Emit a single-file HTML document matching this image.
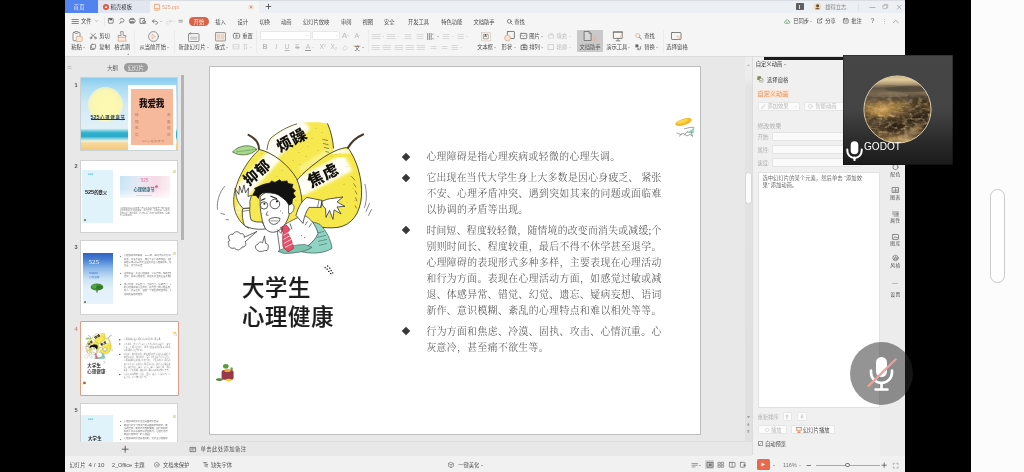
<!DOCTYPE html>
<html lang="zh-CN">
<head>
<meta charset="utf-8">
<title>525.ppt - WPS</title>
<style>
*{box-sizing:border-box;margin:0;padding:0}
html,body{width:1024px;height:472px;overflow:hidden;background:#000}
body{position:relative;font-family:"Liberation Sans","Noto Sans CJK SC",sans-serif;font-size:5.3px;color:#444;line-height:1}
#app div,#app svg,#side div,.ov,.ov div,.ov svg{position:absolute}
#app{position:absolute;left:65px;top:0;width:840.4px;height:472px;background:#f4f4f4;overflow:hidden;filter:blur(.35px)}
#side{position:absolute;left:971px;top:0;width:53px;height:472px;background:#fcfcfc}
.t{white-space:nowrap;font-size:5.3px;line-height:8px;height:8px;color:#484848;letter-spacing:-.05px}
.t.g{color:#b9b9b9}
.ic{overflow:visible}
#tabs{left:0;top:0;width:840px;height:13px;background:#eceff4}
#menu{left:0;top:13px;width:840px;height:14px;background:#f5f5f5}
#tool{left:0;top:27px;width:840px;height:30px;background:#f5f5f5;border-bottom:1px solid #dcdcdc}
#thumbs{left:0;top:57px;width:119px;height:400px;background:#e8e8e8}
#edit{left:119px;top:57px;width:568px;height:400px;background:#e8e8e8}
#slide{left:145px;top:66.6px;width:490px;height:367px;background:#fff;overflow:hidden}
#rpanel{left:687px;top:57px;width:153px;height:400px;background:#f0f0f0}
#status{left:0;top:455.6px;width:841px;height:17px;background:#f1f1f1}
.sep{width:1px;background:#e2e2e2}
/* slide text (coordinates relative to slide) */
.bl{left:216.4px;width:235px;height:16px;line-height:16px;font-family:"Liberation Serif","Noto Serif CJK SC",serif;font-weight:300;font-size:9.8px;color:#484848;white-space:nowrap;text-align:justify;text-align-last:justify}
.bl.s{text-align-last:left;letter-spacing:.42px}
.dm{width:6px;height:6px;background:#383838;transform:rotate(45deg);left:193.4px}
.ttl{left:32px;font-family:"Liberation Sans","Noto Sans CJK SC",sans-serif;font-weight:500;font-size:22.3px;line-height:29px;height:29px;color:#1c1c1c;-webkit-text-stroke:.22px #1c1c1c;white-space:nowrap;letter-spacing:.75px}
/* thumbnails */
.th{left:15.5px;width:97.5px;height:74px;background:#fff;border:.6px solid #cfcfcf;overflow:hidden}
.mini{left:0;top:0;width:490px;height:367px;transform:scale(.198);transform-origin:0 0}
.num{font-size:5.6px;font-weight:bold;color:#555;left:7px;width:8px;text-align:center;height:8px;line-height:8px}
.tt{white-space:nowrap;color:#666;font-size:2.6px;line-height:3.5px;height:3.5px;overflow:hidden}
</style>
</head>
<body>
<div id="app">
<div id="tabs"></div><div id="menu"></div><div id="tool"></div>
<div style="left:0.0px;top:0.0px;width:840.0px;height:1.0px;background:#d9dce2"></div>
<div style="left:0.0px;top:0.0px;width:32.5px;height:13.0px;background:#5283ee"></div>
<div class="t " style="left:8.5px;top:2.8px;width:11.0px;text-align:justify;text-align-last:justify;color:#e8eefc;">首页</div>
<div style="left:33.0px;top:0.5px;width:52.0px;height:12.5px;background:#e1e6f1"></div>
<svg class="ic" style="left:37.5px;top:3.8px" width="6" height="6" viewBox="0 0 6 6" fill="none" stroke="#555" stroke-width="0.8" stroke-linecap="round" stroke-linejoin="round" ><circle cx="3" cy="3" r="3" fill="#e0563f" stroke="none"/><path d="M1.6 4.1 L3 1.6 L4.4 4.1 Z" fill="#fff" stroke="none"/></svg>
<div class="t " style="left:45.5px;top:2.8px;width:21.5px;text-align:justify;text-align-last:justify;color:#333;">稻壳模板</div>
<div style="left:85.0px;top:0.5px;width:108.5px;height:12.5px;background:#f5f5f5;border-radius:2px 2px 0 0"></div>
<svg class="ic" style="left:88.5px;top:3.5px" width="6" height="6.6" viewBox="0 0 6 6.6" fill="none" stroke="#555" stroke-width="0.8" stroke-linecap="round" stroke-linejoin="round" ><rect x=".4" y=".4" width="5.2" height="5.8" rx=".6" fill="#fdf1e6" stroke="#e5a070" stroke-width=".8"/><path d="M1.4 4.6h3.2" stroke="#e5a070" stroke-width=".8"/></svg>
<div class="t " style="left:97.0px;top:2.9px;color:#e0a280;font-size:5.2px">525.ppt</div>
<svg class="ic" style="left:184.0px;top:5.0px" width="4" height="4" viewBox="0 0 4 4" fill="none" stroke="#555" stroke-width="0.8" stroke-linecap="round" stroke-linejoin="round" ><circle cx="2" cy="2" r="2.6" fill="#f6e3d6" stroke="none"/><path d="M1 1l2 2M3 1l-2 2" stroke="#a77" stroke-width=".6"/></svg>
<svg class="ic" style="left:200.8px;top:4.3px" width="5" height="5" viewBox="0 0 5 5" fill="none" stroke="#555" stroke-width="0.8" stroke-linecap="round" stroke-linejoin="round" ><path d="M2.5 .2v4.6M.2 2.5h4.6" stroke="#444" stroke-width=".8"/></svg>
<div style="left:731.0px;top:3.2px;width:7.6px;height:7.0px;background:#5f5f5f;border-radius:.8px"></div>
<div style="left:734.2px;top:4.6px;width:1.2px;height:4.2px;background:#ddd"></div>
<svg class="ic" style="left:748.7px;top:3.3px" width="7" height="7" viewBox="0 0 7 7" fill="none" stroke="#555" stroke-width="0.8" stroke-linecap="round" stroke-linejoin="round" ><circle cx="3.5" cy="3.5" r="3.5" fill="#e9d9b6" stroke="none"/><circle cx="3.6" cy="2.8" r="1.5" fill="#6b4a2b" stroke="none"/><path d="M1.2 6.2c.5-2 4-2 4.6 0z" fill="#7a5530" stroke="none"/></svg>
<div class="t " style="left:760.2px;top:2.9px;width:22.0px;text-align:justify;text-align-last:justify;color:#888;">雄得立志.</div>
<div style="left:793.0px;top:3.0px;width:1.0px;height:8.0px;background:#dfe2e8"></div>
<svg class="ic" style="left:804.8px;top:6.9px" width="5" height="1" viewBox="0 0 5 1" fill="none" stroke="#555" stroke-width="0.8" stroke-linecap="round" stroke-linejoin="round" ><path d="M0 .5h5" stroke="#999" stroke-width=".7"/></svg>
<svg class="ic" style="left:817.5px;top:4.3px" width="5" height="5" viewBox="0 0 5 5" fill="none" stroke="#555" stroke-width="0.8" stroke-linecap="round" stroke-linejoin="round" ><rect x=".3" y="1.2" width="3.4" height="3.4" stroke="#a0a0a0" stroke-width=".6"/><path d="M1.4 1.2V.3h3.3v3.3h-1" stroke="#a0a0a0" stroke-width=".6"/></svg>
<svg class="ic" style="left:831.8px;top:4.6px" width="4.4" height="4.4" viewBox="0 0 4.4 4.4" fill="none" stroke="#555" stroke-width="0.8" stroke-linecap="round" stroke-linejoin="round" ><path d="M.3 .3l3.8 3.8M4.1 .3L.3 4.1" stroke="#999" stroke-width=".7"/></svg>
<svg class="ic" style="left:7.0px;top:18.5px" width="6.4" height="5" viewBox="0 0 6.4 5" fill="none" stroke="#555" stroke-width="0.8" stroke-linecap="round" stroke-linejoin="round" ><path d="M0 .5h6.4M0 2.5h6.4M0 4.5h6.4" stroke="#686868" stroke-width=".8"/></svg>
<div class="t " style="left:16.0px;top:17.0px;width:10.4px;text-align:justify;text-align-last:justify;">文件</div>
<svg class="ic" style="left:30.2px;top:20.3px" width="3" height="2" viewBox="0 0 3 2" fill="none" stroke="#555" stroke-width="0.8" stroke-linecap="round" stroke-linejoin="round" ><path d="M.2 .3l1.3 1.3L2.8 .3" stroke="#999" stroke-width=".6"/></svg>
<div style="left:38.6px;top:15.5px;width:1.0px;height:10.0px;background:#e8e8e8"></div>
<svg class="ic" style="left:42.8px;top:18.2px" width="5.6" height="5.6" viewBox="0 0 5.6 5.6" fill="none" stroke="#555" stroke-width="0.8" stroke-linecap="round" stroke-linejoin="round" ><rect x=".4" y=".4" width="4.8" height="4.8" rx=".5" stroke="#686868"/><rect x="1.5" y=".5" width="2.6" height="1.8" fill="#555" stroke="none"/></svg>
<svg class="ic" style="left:53.6px;top:18.0px" width="6" height="6" viewBox="0 0 6 6" fill="none" stroke="#555" stroke-width="0.8" stroke-linecap="round" stroke-linejoin="round" ><path d="M1 1.2c1.6-1.4 4-.4 4 1.4 0 1.600-2 2.200-3 1.200M2 3.800L.8 5.600" stroke="#686868"/></svg>
<svg class="ic" style="left:64.3px;top:18.2px" width="6.4" height="5.6" viewBox="0 0 6.4 5.6" fill="none" stroke="#555" stroke-width="0.8" stroke-linecap="round" stroke-linejoin="round" ><rect x=".4" y="1.600" width="5.6" height="2.800" rx=".6" stroke="#686868"/><path d="M1.600 1.600V.4h3.200v1.200M1.600 3.600h3.200v1.600H1.600z" stroke="#686868"/></svg>
<svg class="ic" style="left:75.4px;top:18.0px" width="6" height="6" viewBox="0 0 6 6" fill="none" stroke="#555" stroke-width="0.8" stroke-linecap="round" stroke-linejoin="round" ><rect x=".4" y=".4" width="4" height="5" stroke="#686868"/><circle cx="4" cy="3.800" r="1.300" fill="#f5f5f5" stroke="#686868"/><path d="M5 4.800l.8.800" stroke="#686868"/></svg>
<svg class="ic" style="left:86.7px;top:18.5px" width="6" height="5" viewBox="0 0 6 5" fill="none" stroke="#555" stroke-width="0.8" stroke-linecap="round" stroke-linejoin="round" ><path d="M.6 2.200h3c1.400 0 2 .8 2 1.600s-.8 1.400-1.800 1.400M2 .6L.4 2.200 2 3.800" stroke="#666"/></svg>
<svg class="ic" style="left:94.6px;top:20.6px" width="2" height="1.4" viewBox="0 0 2 1.4" fill="none" stroke="#555" stroke-width="0.8" stroke-linecap="round" stroke-linejoin="round" ><path d="M.2 .2l.8.8.8-.8" stroke="#999" stroke-width=".5"/></svg>
<svg class="ic" style="left:100.8px;top:18.5px" width="6" height="5" viewBox="0 0 6 5" fill="none" stroke="#555" stroke-width="0.8" stroke-linecap="round" stroke-linejoin="round" ><path d="M5.400 2.200h-3c-1.400 0-2 .8-2 1.600s.8 1.400 1.800 1.400M4 .6l1.600 1.600L4 3.800" stroke="#cfcfcf"/></svg>
<svg class="ic" style="left:108.0px;top:20.6px" width="2" height="1.4" viewBox="0 0 2 1.4" fill="none" stroke="#555" stroke-width="0.8" stroke-linecap="round" stroke-linejoin="round" ><path d="M.2 .2l.8.8.8-.8" stroke="#ccc" stroke-width=".5"/></svg>
<svg class="ic" style="left:113.7px;top:20.1px" width="3.4" height="2.4" viewBox="0 0 3.4 2.4" fill="none" stroke="#555" stroke-width="0.8" stroke-linecap="round" stroke-linejoin="round" ><path d="M0 .3h3.400M0 2h3.400" stroke="#666" stroke-width=".6"/></svg>
<div style="left:124.0px;top:17.4px;width:19.6px;height:8.8px;background:#d9634a;border-radius:4.4px"></div>
<div class="t " style="left:128.4px;top:17.8px;width:10.8px;text-align:justify;text-align-last:justify;color:#fff3d6;">开始</div>
<div class="t " style="left:150.3px;top:17.6px;width:10.5px;text-align:justify;text-align-last:justify;">插入</div>
<div class="t " style="left:172.4px;top:17.6px;width:10.3px;text-align:justify;text-align-last:justify;">设计</div>
<div class="t " style="left:194.5px;top:17.6px;width:10.5px;text-align:justify;text-align-last:justify;">切换</div>
<div class="t " style="left:216.0px;top:17.6px;width:10.5px;text-align:justify;text-align-last:justify;">动画</div>
<div class="t " style="left:238.0px;top:17.6px;width:26.0px;text-align:justify;text-align-last:justify;">幻灯片放映</div>
<div class="t " style="left:276.0px;top:17.6px;width:10.3px;text-align:justify;text-align-last:justify;">审阅</div>
<div class="t " style="left:297.5px;top:17.6px;width:10.3px;text-align:justify;text-align-last:justify;">视图</div>
<div class="t " style="left:319.0px;top:17.6px;width:10.5px;text-align:justify;text-align-last:justify;">安全</div>
<div class="t " style="left:343.0px;top:17.6px;width:20.8px;text-align:justify;text-align-last:justify;">开发工具</div>
<div class="t " style="left:376.2px;top:17.6px;width:20.8px;text-align:justify;text-align-last:justify;">特色功能</div>
<div class="t " style="left:408.4px;top:17.6px;width:21.0px;text-align:justify;text-align-last:justify;">文档助手</div>
<svg class="ic" style="left:442.0px;top:18.6px" width="5.6" height="5.6" viewBox="0 0 5.6 5.6" fill="none" stroke="#555" stroke-width="0.8" stroke-linecap="round" stroke-linejoin="round" ><circle cx="2.300" cy="2.300" r="1.900" stroke="#686868"/><path d="M3.700 3.700l1.600 1.600" stroke="#686868"/></svg>
<div class="t " style="left:449.3px;top:17.6px;width:10.4px;text-align:justify;text-align-last:justify;">查找</div>
<svg class="ic" style="left:719.0px;top:18.5px" width="6.4" height="5" viewBox="0 0 6.4 5" fill="none" stroke="#555" stroke-width="0.8" stroke-linecap="round" stroke-linejoin="round" ><path d="M1.600 4.400c-1.600 0-1.600-2.200 0-2.200.2-2 3-2 3.200 0 1.600 0 1.600 2.200 0 2.200z" stroke="#6a6"/><path d="M2.400 3l.7.700 1.200-1.300" stroke="#6a6" stroke-width=".6"/></svg>
<div class="t " style="left:728.3px;top:17.3px;width:15.2px;text-align:justify;text-align-last:justify;">已同步</div>
<svg class="ic" style="left:744.6px;top:20.8px" width="2" height="1.4" viewBox="0 0 2 1.4" fill="none" stroke="#555" stroke-width="0.8" stroke-linecap="round" stroke-linejoin="round" ><path d="M.2 .2l.8.8.8-.8" stroke="#999" stroke-width=".5"/></svg>
<svg class="ic" style="left:751.8px;top:18.3px" width="5.6" height="5.4" viewBox="0 0 5.6 5.4" fill="none" stroke="#555" stroke-width="0.8" stroke-linecap="round" stroke-linejoin="round" ><path d="M2.400 1H.5v4h4V3.400" stroke="#666" stroke-width=".7"/><path d="M2.400 3c.2-1.400 1.200-2 2.600-2M4 .2L5.200 1 4 1.900" stroke="#666" stroke-width=".7"/></svg>
<div class="t " style="left:760.3px;top:17.3px;width:10.4px;text-align:justify;text-align-last:justify;">分享</div>
<svg class="ic" style="left:777.6px;top:18.2px" width="5.6" height="5.6" viewBox="0 0 5.6 5.6" fill="none" stroke="#555" stroke-width="0.8" stroke-linecap="round" stroke-linejoin="round" ><rect x=".4" y=".8" width="4.800" height="4.400" rx=".6" stroke="#666" stroke-width=".7"/><path d="M1.600 .3v1.200M4 .3v1.200M1.600 3h2.400" stroke="#666" stroke-width=".7"/></svg>
<div class="t " style="left:786.2px;top:17.3px;width:10.4px;text-align:justify;text-align-last:justify;">批注</div>
<div class="t " style="left:805.6px;top:17.3px;font-size:7px;color:#666">?</div>
<svg class="ic" style="left:818.8px;top:18.5px" width="1" height="5" viewBox="0 0 1 5" fill="none" stroke="#555" stroke-width="0.8" stroke-linecap="round" stroke-linejoin="round" ><circle cx=".5" cy=".6" r=".45" fill="#888" stroke="none"/><circle cx=".5" cy="2.500" r=".45" fill="#888" stroke="none"/><circle cx=".5" cy="4.400" r=".45" fill="#888" stroke="none"/></svg>
<svg class="ic" style="left:827.5px;top:19.5px" width="5.6" height="3" viewBox="0 0 5.6 3" fill="none" stroke="#555" stroke-width="0.8" stroke-linecap="round" stroke-linejoin="round" ><path d="M.3 2.700L2.800 .4l2.500 2.300" stroke="#888" stroke-width=".7"/></svg>
<svg class="ic" style="left:7.1px;top:30.6px" width="11" height="11.5" viewBox="0 0 11 11.5" fill="none" stroke="#555" stroke-width="0.8" stroke-linecap="round" stroke-linejoin="round" ><rect x="1" y="1.400" width="7" height="8.400" rx="1" stroke="#777" stroke-width=".8"/><rect x="2.800" y=".5" width="3.400" height="1.800" rx=".5" fill="#f5f5f5" stroke="#777" stroke-width=".7"/><rect x="4.400" y="5.400" width="5.800" height="5.200" rx=".8" fill="#fbe9dc" stroke="#d9a98a" stroke-width=".8"/></svg>
<div class="t " style="left:6.2px;top:43.3px;width:10.4px;text-align:justify;text-align-last:justify;">粘贴</div>
<svg class="ic" style="left:18.4px;top:47.0px" width="2" height="1.4" viewBox="0 0 2 1.4" fill="none" stroke="#555" stroke-width="0.8" stroke-linecap="round" stroke-linejoin="round" ><path d="M0 .2h2L1 1.300z" fill="#888" stroke="none"/></svg>
<svg class="ic" style="left:24.8px;top:32.9px" width="6.4" height="6" viewBox="0 0 6.4 6" fill="none" stroke="#555" stroke-width="0.8" stroke-linecap="round" stroke-linejoin="round" ><path d="M.8 .6l4.600 4M5.400 .6L.8 4.600" stroke="#686868" stroke-width=".7"/><circle cx="1" cy="5" r=".9" stroke="#686868" stroke-width=".6"/><circle cx="5.400" cy="5" r=".9" stroke="#686868" stroke-width=".6"/></svg>
<div class="t " style="left:34.3px;top:32.0px;width:10.4px;text-align:justify;text-align-last:justify;">剪切</div>
<svg class="ic" style="left:25.4px;top:43.7px" width="6" height="6" viewBox="0 0 6 6" fill="none" stroke="#555" stroke-width="0.8" stroke-linecap="round" stroke-linejoin="round" ><rect x="1.600" y=".4" width="4" height="4" rx=".5" stroke="#686868" stroke-width=".7"/><path d="M.5 1.800v3.700h3.700" stroke="#686868" stroke-width=".7"/></svg>
<div class="t " style="left:34.3px;top:43.3px;width:10.4px;text-align:justify;text-align-last:justify;">复制</div>
<svg class="ic" style="left:52.3px;top:30.7px" width="10" height="11" viewBox="0 0 10 11" fill="none" stroke="#555" stroke-width="0.8" stroke-linecap="round" stroke-linejoin="round" ><path d="M3.800 .6h2.400v3.800h2.600v2H1.200v-2h2.600z" stroke="#888" stroke-width=".8" fill="#f7efe8"/><path d="M1.600 6.400L.8 10.200h8.400L8.400 6.400" stroke="#d9a98a" stroke-width=".8" fill="#fbe9dc"/></svg>
<div class="t " style="left:49.2px;top:43.3px;width:16.0px;text-align:justify;text-align-last:justify;">格式刷</div>
<div style="left:69.4px;top:30.0px;width:1.0px;height:23.0px;background:#ebebeb"></div>
<svg class="ic" style="left:61.5px;top:53.3px" width="2" height="2" viewBox="0 0 2 2" fill="none" stroke="#555" stroke-width="0.8" stroke-linecap="round" stroke-linejoin="round" ><path d="M2 0v2H0z" fill="#aaa" stroke="none"/></svg>
<svg class="ic" style="left:82.9px;top:30.9px" width="11" height="11" viewBox="0 0 11 11" fill="none" stroke="#555" stroke-width="0.8" stroke-linecap="round" stroke-linejoin="round" ><circle cx="5.500" cy="5.500" r="4.900" stroke="#777" stroke-width=".8"/><path d="M4.400 3.400l3 2.100-3 2.100z" stroke="#e0a07c" stroke-width=".7" fill="#fdf3ec"/></svg>
<div class="t " style="left:74.4px;top:43.3px;width:26.5px;text-align:justify;text-align-last:justify;">从当前开始</div>
<svg class="ic" style="left:102.3px;top:47.0px" width="2" height="1.4" viewBox="0 0 2 1.4" fill="none" stroke="#555" stroke-width="0.8" stroke-linecap="round" stroke-linejoin="round" ><path d="M0 .2h2L1 1.300z" fill="#888" stroke="none"/></svg>
<div style="left:109.4px;top:30.0px;width:1.0px;height:23.0px;background:#ebebeb"></div>
<svg class="ic" style="left:122.7px;top:31.6px" width="11.5" height="10" viewBox="0 0 11.5 10" fill="none" stroke="#555" stroke-width="0.8" stroke-linecap="round" stroke-linejoin="round" ><rect x=".5" y="1.600" width="10.500" height="7.900" rx=".8" stroke="#777" stroke-width=".8"/><path d="M2.600 .4v2M2.600 5.200h6.400M2.600 7h6.400" stroke="#999" stroke-width=".7"/></svg>
<div class="t " style="left:113.6px;top:43.3px;width:27.0px;text-align:justify;text-align-last:justify;">新建幻灯片</div>
<svg class="ic" style="left:142.3px;top:47.0px" width="2" height="1.4" viewBox="0 0 2 1.4" fill="none" stroke="#555" stroke-width="0.8" stroke-linecap="round" stroke-linejoin="round" ><path d="M0 .2h2L1 1.300z" fill="#888" stroke="none"/></svg>
<svg class="ic" style="left:149.9px;top:31.6px" width="11" height="9.5" viewBox="0 0 11 9.5" fill="none" stroke="#555" stroke-width="0.8" stroke-linecap="round" stroke-linejoin="round" ><rect x=".5" y=".5" width="10" height="8.500" rx=".6" stroke="#888" stroke-width=".8" fill="#f2e6dc"/><rect x="2" y="2.200" width="3" height="5" fill="#e6d3c3" stroke="none"/><rect x="6" y="2.200" width="3" height="5" fill="#e6d3c3" stroke="none"/></svg>
<div class="t " style="left:149.6px;top:43.3px;width:10.4px;text-align:justify;text-align-last:justify;">版式</div>
<svg class="ic" style="left:161.2px;top:47.0px" width="2" height="1.4" viewBox="0 0 2 1.4" fill="none" stroke="#555" stroke-width="0.8" stroke-linecap="round" stroke-linejoin="round" ><path d="M0 .2h2L1 1.300z" fill="#888" stroke="none"/></svg>
<svg class="ic" style="left:167.9px;top:33.1px" width="7" height="5.6" viewBox="0 0 7 5.6" fill="none" stroke="#555" stroke-width="0.8" stroke-linecap="round" stroke-linejoin="round" ><rect x=".4" y=".4" width="6.200" height="4.800" rx="1" stroke="#666" stroke-width=".7"/><path d="M2.400 2.800h2.400M3.600 1.800v2" stroke="#666" stroke-width=".6"/></svg>
<div class="t " style="left:177.3px;top:32.0px;width:10.4px;text-align:justify;text-align-last:justify;">重置</div>
<svg class="ic" style="left:168.2px;top:44.2px" width="6.4" height="5.4" viewBox="0 0 6.4 5.4" fill="none" stroke="#555" stroke-width="0.8" stroke-linecap="round" stroke-linejoin="round" ><rect x=".4" y=".4" width="5.600" height="4.600" stroke="#cdcdcd" stroke-width=".7"/><path d="M.4 2.700h5.600" stroke="#cdcdcd" stroke-width=".6"/></svg>
<div class="t g" style="left:177.6px;top:43.3px;">节</div>
<svg class="ic" style="left:184.6px;top:47.0px" width="2" height="1.4" viewBox="0 0 2 1.4" fill="none" stroke="#555" stroke-width="0.8" stroke-linecap="round" stroke-linejoin="round" ><path d="M0 .2h2L1 1.300z" fill="#cdcdcd" stroke="none"/></svg>
<div style="left:191.2px;top:30.0px;width:1.0px;height:23.0px;background:#ebebeb"></div>
<div style="left:195.0px;top:31.2px;width:50.5px;height:9.0px;background:#fff;border:.6px solid #e8e8e8;border-radius:1px"></div>
<svg class="ic" style="left:241.0px;top:35.1px" width="2" height="1.4" viewBox="0 0 2 1.4" fill="none" stroke="#555" stroke-width="0.8" stroke-linecap="round" stroke-linejoin="round" ><path d="M0 .2h2L1 1.300z" fill="#d0d0d0" stroke="none"/></svg>
<div style="left:246.5px;top:31.2px;width:28.3px;height:9.0px;background:#fff;border:.6px solid #e8e8e8;border-radius:1px"></div>
<svg class="ic" style="left:270.5px;top:35.1px" width="2" height="1.4" viewBox="0 0 2 1.4" fill="none" stroke="#555" stroke-width="0.8" stroke-linecap="round" stroke-linejoin="round" ><path d="M0 .2h2L1 1.300z" fill="#d0d0d0" stroke="none"/></svg>
<div class="t g" style="left:277.0px;top:32.1px;font-size:7.5px">A</div>
<div class="t g" style="left:281.8px;top:30.7px;font-size:4px">+</div>
<div class="t g" style="left:289.5px;top:32.1px;font-size:7px">A</div>
<div class="t g" style="left:294.0px;top:30.7px;font-size:4px">-</div>
<div class="t g" style="left:197.4px;top:43.3px;font-size:7px;font-weight:bold">B</div>
<div class="t g" style="left:210.2px;top:43.3px;font-size:7px;font-style:italic">I</div>
<div class="t g" style="left:219.6px;top:43.3px;font-size:7px;text-decoration:underline">U</div>
<div class="t g" style="left:230.0px;top:43.3px;font-size:7px;text-decoration:line-through">S</div>
<div class="t " style="left:240.8px;top:42.9px;font-size:6.600px;color:#bbb">A</div>
<div style="left:240.2px;top:50.3px;width:6.0px;height:0.8px;background:#999"></div>
<svg class="ic" style="left:247.0px;top:47.0px" width="2" height="1.4" viewBox="0 0 2 1.4" fill="none" stroke="#555" stroke-width="0.8" stroke-linecap="round" stroke-linejoin="round" ><path d="M0 .2h2L1 1.300z" fill="#cdcdcd" stroke="none"/></svg>
<div class="t g" style="left:254.5px;top:43.3px;font-size:6.500px">X</div>
<div class="t g" style="left:259.0px;top:41.5px;font-size:3.500px">2</div>
<div class="t g" style="left:265.5px;top:43.3px;font-size:6.500px">X</div>
<div class="t g" style="left:270.0px;top:44.9px;font-size:3.500px">2</div>
<svg class="ic" style="left:277.3px;top:44.5px" width="6" height="5.6" viewBox="0 0 6 5.6" fill="none" stroke="#555" stroke-width="0.8" stroke-linecap="round" stroke-linejoin="round" ><path d="M1 3.200L3.200 .6l2.200 2.200L3.400 5H1.800z" stroke="#cdcdcd" stroke-width=".7"/></svg>
<div style="left:288.4px;top:44.6px;width:7.6px;height:2.4px;background:#f3d9c6;border-radius:1.200px"></div>
<div class="t " style="left:289.6px;top:44.3px;font-size:5.400px;color:#555">文</div>
<svg class="ic" style="left:297.4px;top:47.0px" width="2" height="1.4" viewBox="0 0 2 1.4" fill="none" stroke="#555" stroke-width="0.8" stroke-linecap="round" stroke-linejoin="round" ><path d="M0 .2h2L1 1.300z" fill="#777" stroke="none"/></svg>
<div style="left:302.6px;top:30.0px;width:1.0px;height:23.0px;background:#ebebeb"></div>
<svg class="ic" style="left:307.0px;top:33.8px" width="8" height="5" viewBox="0 0 8 5" fill="none" stroke="#555" stroke-width="0.8" stroke-linecap="round" stroke-linejoin="round" ><path d="M0 0.5h8" stroke="#cdcdcd" stroke-width=".7"/><path d="M0 2.5h8" stroke="#cdcdcd" stroke-width=".7"/><path d="M0 4.5h8" stroke="#cdcdcd" stroke-width=".7"/></svg>
<svg class="ic" style="left:317.0px;top:36.0px" width="2" height="1.4" viewBox="0 0 2 1.4" fill="none" stroke="#555" stroke-width="0.8" stroke-linecap="round" stroke-linejoin="round" ><path d="M0 .2h2L1 1.300z" fill="#cdcdcd" stroke="none"/></svg>
<svg class="ic" style="left:322.0px;top:33.8px" width="8" height="5" viewBox="0 0 8 5" fill="none" stroke="#555" stroke-width="0.8" stroke-linecap="round" stroke-linejoin="round" ><path d="M0 0.5h8" stroke="#cdcdcd" stroke-width=".7"/><path d="M0 2.5h8" stroke="#cdcdcd" stroke-width=".7"/><path d="M0 4.5h8" stroke="#cdcdcd" stroke-width=".7"/></svg>
<svg class="ic" style="left:332.0px;top:36.0px" width="2" height="1.4" viewBox="0 0 2 1.4" fill="none" stroke="#555" stroke-width="0.8" stroke-linecap="round" stroke-linejoin="round" ><path d="M0 .2h2L1 1.300z" fill="#cdcdcd" stroke="none"/></svg>
<svg class="ic" style="left:339.5px;top:33.8px" width="6" height="5" viewBox="0 0 6 5" fill="none" stroke="#555" stroke-width="0.8" stroke-linecap="round" stroke-linejoin="round" ><path d="M0 0.5h6" stroke="#cdcdcd" stroke-width=".7"/><path d="M0 2.5h6" stroke="#cdcdcd" stroke-width=".7"/><path d="M0 4.5h6" stroke="#cdcdcd" stroke-width=".7"/></svg>
<svg class="ic" style="left:351.5px;top:33.8px" width="6" height="5" viewBox="0 0 6 5" fill="none" stroke="#555" stroke-width="0.8" stroke-linecap="round" stroke-linejoin="round" ><path d="M0 0.5h6" stroke="#cdcdcd" stroke-width=".7"/><path d="M0 2.5h6" stroke="#cdcdcd" stroke-width=".7"/><path d="M0 4.5h6" stroke="#cdcdcd" stroke-width=".7"/></svg>
<svg class="ic" style="left:362.1px;top:32.8px" width="6.5" height="7" viewBox="0 0 6.5 7" fill="none" stroke="#555" stroke-width="0.8" stroke-linecap="round" stroke-linejoin="round" ><path d="M.6 .4v6.200M2.400 .4v6.200M4.200 .4v6.200" stroke="#777" stroke-width=".8"/><path d="M5.400 1.600l.8-.9.800.9M5.400 5.400l.8.900.8-.9" stroke="#777" stroke-width=".5"/></svg>
<svg class="ic" style="left:371.6px;top:36.0px" width="2" height="1.4" viewBox="0 0 2 1.4" fill="none" stroke="#555" stroke-width="0.8" stroke-linecap="round" stroke-linejoin="round" ><path d="M0 .2h2L1 1.300z" fill="#888" stroke="none"/></svg>
<svg class="ic" style="left:378.0px;top:33.8px" width="6" height="5" viewBox="0 0 6 5" fill="none" stroke="#555" stroke-width="0.8" stroke-linecap="round" stroke-linejoin="round" ><path d="M0 0.5h6" stroke="#cdcdcd" stroke-width=".7"/><path d="M0 2.5h6" stroke="#cdcdcd" stroke-width=".7"/><path d="M0 4.5h6" stroke="#cdcdcd" stroke-width=".7"/></svg>
<svg class="ic" style="left:386.6px;top:36.0px" width="2" height="1.4" viewBox="0 0 2 1.4" fill="none" stroke="#555" stroke-width="0.8" stroke-linecap="round" stroke-linejoin="round" ><path d="M0 .2h2L1 1.300z" fill="#cdcdcd" stroke="none"/></svg>
<svg class="ic" style="left:393.2px;top:33.8px" width="5.5" height="5" viewBox="0 0 5.5 5" fill="none" stroke="#555" stroke-width="0.8" stroke-linecap="round" stroke-linejoin="round" ><path d="M0 0.5h5.5" stroke="#cdcdcd" stroke-width=".7"/><path d="M0 2.5h5.5" stroke="#cdcdcd" stroke-width=".7"/><path d="M0 4.5h5.5" stroke="#cdcdcd" stroke-width=".7"/></svg>
<svg class="ic" style="left:401.4px;top:36.0px" width="2" height="1.4" viewBox="0 0 2 1.4" fill="none" stroke="#555" stroke-width="0.8" stroke-linecap="round" stroke-linejoin="round" ><path d="M0 .2h2L1 1.300z" fill="#cdcdcd" stroke="none"/></svg>
<svg class="ic" style="left:306.6px;top:44.8px" width="7.5" height="5" viewBox="0 0 7.5 5" fill="none" stroke="#555" stroke-width="0.8" stroke-linecap="round" stroke-linejoin="round" ><path d="M0 0.5h7.5" stroke="#cdcdcd" stroke-width=".7"/><path d="M0 2.5h7.5" stroke="#cdcdcd" stroke-width=".7"/><path d="M0 4.5h7.5" stroke="#cdcdcd" stroke-width=".7"/></svg>
<svg class="ic" style="left:318.2px;top:44.8px" width="7.5" height="5" viewBox="0 0 7.5 5" fill="none" stroke="#555" stroke-width="0.8" stroke-linecap="round" stroke-linejoin="round" ><path d="M0 0.5h7.5" stroke="#cdcdcd" stroke-width=".7"/><path d="M0 2.5h7.5" stroke="#cdcdcd" stroke-width=".7"/><path d="M0 4.5h7.5" stroke="#cdcdcd" stroke-width=".7"/></svg>
<svg class="ic" style="left:329.6px;top:44.8px" width="7.5" height="5" viewBox="0 0 7.5 5" fill="none" stroke="#555" stroke-width="0.8" stroke-linecap="round" stroke-linejoin="round" ><path d="M0 0.5h7.5" stroke="#cdcdcd" stroke-width=".7"/><path d="M0 2.5h7.5" stroke="#cdcdcd" stroke-width=".7"/><path d="M0 4.5h7.5" stroke="#cdcdcd" stroke-width=".7"/></svg>
<svg class="ic" style="left:340.9px;top:44.8px" width="7.5" height="5" viewBox="0 0 7.5 5" fill="none" stroke="#555" stroke-width="0.8" stroke-linecap="round" stroke-linejoin="round" ><path d="M0 0.5h7.5" stroke="#cdcdcd" stroke-width=".7"/><path d="M0 2.5h7.5" stroke="#cdcdcd" stroke-width=".7"/><path d="M0 4.5h7.5" stroke="#cdcdcd" stroke-width=".7"/></svg>
<svg class="ic" style="left:352.1px;top:44.8px" width="7.5" height="5" viewBox="0 0 7.5 5" fill="none" stroke="#555" stroke-width="0.8" stroke-linecap="round" stroke-linejoin="round" ><path d="M0 0.5h7.5" stroke="#cdcdcd" stroke-width=".7"/><path d="M0 2.5h7.5" stroke="#cdcdcd" stroke-width=".7"/><path d="M0 4.5h7.5" stroke="#cdcdcd" stroke-width=".7"/></svg>
<svg class="ic" style="left:366.1px;top:45.8px" width="5" height="3" viewBox="0 0 5 3" fill="none" stroke="#555" stroke-width="0.8" stroke-linecap="round" stroke-linejoin="round" ><path d="M0 0.5h5" stroke="#cdcdcd" stroke-width=".7"/><path d="M0 2.5h5" stroke="#cdcdcd" stroke-width=".7"/></svg>
<svg class="ic" style="left:376.5px;top:45.8px" width="5" height="3" viewBox="0 0 5 3" fill="none" stroke="#555" stroke-width="0.8" stroke-linecap="round" stroke-linejoin="round" ><path d="M0 0.5h5" stroke="#cdcdcd" stroke-width=".7"/><path d="M0 2.5h5" stroke="#cdcdcd" stroke-width=".7"/></svg>
<svg class="ic" style="left:386.9px;top:44.8px" width="5.5" height="5" viewBox="0 0 5.5 5" fill="none" stroke="#555" stroke-width="0.8" stroke-linecap="round" stroke-linejoin="round" ><path d="M0 0.5h5.5" stroke="#cdcdcd" stroke-width=".7"/><path d="M0 2.5h5.5" stroke="#cdcdcd" stroke-width=".7"/><path d="M0 4.5h5.5" stroke="#cdcdcd" stroke-width=".7"/></svg>
<svg class="ic" style="left:394.8px;top:47.0px" width="2" height="1.4" viewBox="0 0 2 1.4" fill="none" stroke="#555" stroke-width="0.8" stroke-linecap="round" stroke-linejoin="round" ><path d="M0 .2h2L1 1.300z" fill="#cdcdcd" stroke="none"/></svg>
<svg class="ic" style="left:415.5px;top:31.5px" width="10" height="9.5" viewBox="0 0 10 9.5" fill="none" stroke="#555" stroke-width="0.8" stroke-linecap="round" stroke-linejoin="round" ><rect x=".6" y=".6" width="8.800" height="8.300" stroke="#c9b7a9" stroke-width=".6" stroke-dasharray="1 .8" fill="#fdf8f4"/><rect x="2.800" y="2.400" width="4.400" height="4.400" stroke="#686868" stroke-width=".6" fill="#fff"/></svg>
<div class="t " style="left:419.2px;top:32.3px;font-size:3.600px;font-weight:bold;color:#444;height:5px;line-height:5px;margin-top:1.500px">A</div>
<div class="t " style="left:412.2px;top:43.3px;width:15.5px;text-align:justify;text-align-last:justify;">文本框</div>
<svg class="ic" style="left:429.3px;top:47.0px" width="2" height="1.4" viewBox="0 0 2 1.4" fill="none" stroke="#555" stroke-width="0.8" stroke-linecap="round" stroke-linejoin="round" ><path d="M0 .2h2L1 1.300z" fill="#888" stroke="none"/></svg>
<svg class="ic" style="left:438.9px;top:30.8px" width="11" height="10.5" viewBox="0 0 11 10.5" fill="none" stroke="#555" stroke-width="0.8" stroke-linecap="round" stroke-linejoin="round" ><rect x="3.400" y=".5" width="7" height="7" rx=".5" stroke="#666" stroke-width=".8" fill="#f5f5f5"/><circle cx="3.600" cy="7" r="3" fill="#f7e2d2" stroke="#d9a98a" stroke-width=".7"/></svg>
<div class="t " style="left:436.6px;top:43.3px;width:10.4px;text-align:justify;text-align-last:justify;">形状</div>
<svg class="ic" style="left:448.6px;top:47.0px" width="2" height="1.4" viewBox="0 0 2 1.4" fill="none" stroke="#555" stroke-width="0.8" stroke-linecap="round" stroke-linejoin="round" ><path d="M0 .2h2L1 1.300z" fill="#888" stroke="none"/></svg>
<svg class="ic" style="left:455.2px;top:32.7px" width="7.2" height="6" viewBox="0 0 7.2 6" fill="none" stroke="#555" stroke-width="0.8" stroke-linecap="round" stroke-linejoin="round" ><rect x=".4" y=".4" width="6.400" height="5.200" rx=".8" stroke="#666" stroke-width=".8"/><path d="M1.200 2l2.200 1.400L5.800 1.800" stroke="#888" stroke-width=".6"/></svg>
<div class="t " style="left:464.3px;top:32.0px;width:10.4px;text-align:justify;text-align-last:justify;">图片</div>
<svg class="ic" style="left:476.3px;top:35.7px" width="2" height="1.4" viewBox="0 0 2 1.4" fill="none" stroke="#555" stroke-width="0.8" stroke-linecap="round" stroke-linejoin="round" ><path d="M0 .2h2L1 1.300z" fill="#888" stroke="none"/></svg>
<svg class="ic" style="left:455.6px;top:43.9px" width="6.4" height="6" viewBox="0 0 6.4 6" fill="none" stroke="#555" stroke-width="0.8" stroke-linecap="round" stroke-linejoin="round" ><rect x=".4" y="1.400" width="5.600" height="4.200" stroke="#666" stroke-width=".8"/><rect x="1.800" y="2.600" width="2.800" height="1.800" fill="#666" stroke="none"/><path d="M1.600 .4h3.200" stroke="#666" stroke-width=".7"/></svg>
<div class="t " style="left:464.3px;top:43.3px;width:10.4px;text-align:justify;text-align-last:justify;">排列</div>
<svg class="ic" style="left:476.3px;top:47.0px" width="2" height="1.4" viewBox="0 0 2 1.4" fill="none" stroke="#555" stroke-width="0.8" stroke-linecap="round" stroke-linejoin="round" ><path d="M0 .2h2L1 1.300z" fill="#888" stroke="none"/></svg>
<svg class="ic" style="left:482.6px;top:33.1px" width="6.4" height="5.6" viewBox="0 0 6.4 5.6" fill="none" stroke="#555" stroke-width="0.8" stroke-linecap="round" stroke-linejoin="round" ><path d="M.5 2h5.400l-.5 3.200H1zM2 2V.5h2.400V2" stroke="#cdcdcd" stroke-width=".7"/></svg>
<div class="t g" style="left:491.6px;top:32.0px;width:10.4px;text-align:justify;text-align-last:justify;">填充</div>
<svg class="ic" style="left:503.6px;top:35.7px" width="2" height="1.4" viewBox="0 0 2 1.4" fill="none" stroke="#555" stroke-width="0.8" stroke-linecap="round" stroke-linejoin="round" ><path d="M0 .2h2L1 1.300z" fill="#cdcdcd" stroke="none"/></svg>
<svg class="ic" style="left:482.8px;top:43.9px" width="6" height="6" viewBox="0 0 6 6" fill="none" stroke="#555" stroke-width="0.8" stroke-linecap="round" stroke-linejoin="round" ><rect x=".5" y=".5" width="5" height="5" stroke="#cdcdcd" stroke-width=".9"/></svg>
<div class="t g" style="left:491.6px;top:43.3px;width:10.4px;text-align:justify;text-align-last:justify;">轮廓</div>
<svg class="ic" style="left:503.6px;top:47.0px" width="2" height="1.4" viewBox="0 0 2 1.4" fill="none" stroke="#555" stroke-width="0.8" stroke-linecap="round" stroke-linejoin="round" ><path d="M0 .2h2L1 1.300z" fill="#cdcdcd" stroke="none"/></svg>
<div style="left:512.2px;top:30.4px;width:25.5px;height:21.8px;background:#c9c9c9;border-radius:1px"></div>
<svg class="ic" style="left:519.4px;top:31.0px" width="8" height="10" viewBox="0 0 8 10" fill="none" stroke="#555" stroke-width="0.8" stroke-linecap="round" stroke-linejoin="round" ><path d="M.5 .5h4.600l2 2v7H.5z" stroke="#686868" stroke-width=".8" fill="#d8d8d8"/><path d="M5 .6v2h2" stroke="#686868" stroke-width=".6"/></svg>
<svg class="ic" style="left:527.1px;top:35.6px" width="5" height="6" viewBox="0 0 5 6" fill="none" stroke="#555" stroke-width="0.8" stroke-linecap="round" stroke-linejoin="round" ><path d="M2.500 0v6M.3 1.600l4.400 2.800M4.700 1.600L.3 4.400" stroke="#e3b79c" stroke-width=".6"/></svg>
<div class="t " style="left:514.4px;top:43.3px;width:20.8px;text-align:justify;text-align-last:justify;color:#555">文档助手</div>
<svg class="ic" style="left:547.8px;top:31.0px" width="10" height="10.5" viewBox="0 0 10 10.5" fill="none" stroke="#555" stroke-width="0.8" stroke-linecap="round" stroke-linejoin="round" ><rect x=".8" y="1" width="8.400" height="6.400" stroke="#666" stroke-width=".8" fill="#fbf6f2"/><path d="M.3 1h9.400M5 7.400v1.800M3.200 9.800h3.600" stroke="#666" stroke-width=".8"/><path d="M7 6.200l1.200-1.600" stroke="#d9a98a" stroke-width=".7"/></svg>
<div class="t " style="left:541.3px;top:43.3px;width:20.8px;text-align:justify;text-align-last:justify;">演示工具</div>
<svg class="ic" style="left:563.3px;top:47.0px" width="2" height="1.4" viewBox="0 0 2 1.4" fill="none" stroke="#555" stroke-width="0.8" stroke-linecap="round" stroke-linejoin="round" ><path d="M0 .2h2L1 1.300z" fill="#888" stroke="none"/></svg>
<svg class="ic" style="left:569.7px;top:32.7px" width="7" height="6.4" viewBox="0 0 7 6.4" fill="none" stroke="#555" stroke-width="0.8" stroke-linecap="round" stroke-linejoin="round" ><circle cx="2.800" cy="2.600" r="2.100" stroke="#e0b193" stroke-width=".8"/><path d="M4.400 4.200L6.400 6" stroke="#666" stroke-width=".9"/></svg>
<div class="t " style="left:579.3px;top:32.0px;width:10.4px;text-align:justify;text-align-last:justify;">查找</div>
<svg class="ic" style="left:569.8px;top:43.7px" width="6.4" height="6.4" viewBox="0 0 6.4 6.4" fill="none" stroke="#555" stroke-width="0.8" stroke-linecap="round" stroke-linejoin="round" ><rect x=".4" y=".4" width="3" height="3" fill="#666" stroke="none"/><path d="M5.600 2.600v2.600H2.600M3.600 4.200l-1 1 1 1" stroke="#666" stroke-width=".7"/></svg>
<div class="t " style="left:579.3px;top:43.3px;width:10.4px;text-align:justify;text-align-last:justify;">替换</div>
<svg class="ic" style="left:591.4px;top:47.0px" width="2" height="1.4" viewBox="0 0 2 1.4" fill="none" stroke="#555" stroke-width="0.8" stroke-linecap="round" stroke-linejoin="round" ><path d="M0 .2h2L1 1.300z" fill="#888" stroke="none"/></svg>
<div style="left:597.8px;top:30.0px;width:1.0px;height:23.0px;background:#ebebeb"></div>
<svg class="ic" style="left:605.8px;top:31.7px" width="10.5" height="9" viewBox="0 0 10.5 9" fill="none" stroke="#555" stroke-width="0.8" stroke-linecap="round" stroke-linejoin="round" ><rect x=".5" y=".5" width="9.500" height="7" rx=".6" stroke="#666" stroke-width=".8"/><path d="M6 4l1.800 3.800.5-1.400 1.400-.3z" fill="#fbe9dc" stroke="#d9a98a" stroke-width=".5"/></svg>
<div class="t " style="left:601.3px;top:43.3px;width:21.4px;text-align:justify;text-align-last:justify;">选择窗格</div>
<div id="thumbs"></div>
<svg class="ic" style="left:2.8px;top:65.8px" width="3" height="3" viewBox="0 0 3 3" fill="none" stroke="#555" stroke-width="0.8" stroke-linecap="round" stroke-linejoin="round" ><path d="M0 .5h3M0 2.500h3" stroke="#aaa" stroke-width=".6"/></svg>
<div class="t " style="left:42.2px;top:63.6px;width:10.6px;text-align:justify;text-align-last:justify;color:#555">大纲</div>
<div style="left:58.6px;top:62.8px;width:24.6px;height:9.6px;background:#9b9b9b;border-radius:4.800px"></div>
<div class="t " style="left:62.8px;top:63.6px;width:16.0px;text-align:justify;text-align-last:justify;color:#f2f2f2">幻灯片</div>
<div style="left:115.8px;top:75.0px;width:3.2px;height:164.5px;background:#b4b4b4"></div>
<div class="num" style="top:80.5px">1</div><div style="left:15.4px;top:77.2px;width:97.2px;height:74.2px;background:linear-gradient(180deg,#86cbee 0%,#a9dbf3 12%,#cfe9f6 36%,#e2f1f7 70%,#7fd0df 73%,#2fb3cf 76%,#2aa9c9 81%,#9edbe4 85%,#f4f0dc 87.5%,#f7d99c 90%,#f3c97c 100%);border:.6px solid #c9d3d6"></div>
<div style="left:22.5px;top:87.0px;width:35.0px;height:35.0px;border-radius:50%;background:radial-gradient(circle,#fdf9b4 0%,#fcf7b0 55%,rgba(252,247,185,.7) 70%,rgba(252,248,210,.25) 85%,rgba(252,248,220,0) 100%)"></div>
<div class="t " style="left:25.6px;top:113.4px;width:34.0px;text-align:justify;text-align-last:justify;font-size:4.200px;font-weight:bold;color:#1f3a4a;border-bottom:.5px solid #1f3a4a;height:6.400px;line-height:6px;top:114.0px"><span style="position:static;font-size:5.400px">525</span>心理健康节</div>
<div style="left:62.8px;top:85.4px;width:48.6px;height:64.2px;background:#fefefe"></div>
<div style="left:66.4px;top:88.8px;width:42.0px;height:56.4px;background:#f6b99b"></div>
<div style="left:74.2px;top:98.2px;width:25.600px;height:11px;line-height:11px;font-size:10px;font-weight:900;color:#1c1412;white-space:nowrap;transform:scaleX(.86);transform-origin:0 0;letter-spacing:-.2px">我爱我</div>
<div class="tt" style="left:70.0px;top:113.8px;width:4.0px;font-size:3.600px;height:5px;line-height:5px;color:#c88a6c;font-weight:bold;top:113.0px">珍</div>
<div class="tt" style="left:70.0px;top:120.3px;width:4.0px;font-size:3.600px;height:5px;line-height:5px;color:#c88a6c;font-weight:bold;top:119.6px">惜</div>
<div class="tt" style="left:70.0px;top:126.9px;width:4.0px;font-size:3.600px;height:5px;line-height:5px;color:#c88a6c;font-weight:bold;top:126.2px">生</div>
<div class="tt" style="left:70.0px;top:133.6px;width:4.0px;font-size:3.600px;height:5px;line-height:5px;color:#c88a6c;font-weight:bold;top:132.8px">命</div>
<div class="tt" style="left:102.0px;top:113.8px;width:4.0px;font-size:3.600px;height:5px;line-height:5px;color:#c88a6c;font-weight:bold;top:113.0px">关</div>
<div class="tt" style="left:102.0px;top:120.3px;width:4.0px;font-size:3.600px;height:5px;line-height:5px;color:#c88a6c;font-weight:bold;top:119.6px">爱</div>
<div class="tt" style="left:102.0px;top:126.9px;width:4.0px;font-size:3.600px;height:5px;line-height:5px;color:#c88a6c;font-weight:bold;top:126.2px">自</div>
<div class="tt" style="left:102.0px;top:133.6px;width:4.0px;font-size:3.600px;height:5px;line-height:5px;color:#c88a6c;font-weight:bold;top:132.8px">己</div>
<div class="tt" style="left:77.0px;top:139.8px;width:22.0px;color:#b57a5e;font-size:2.800px;text-align:justify;text-align-last:justify">525心理健康节</div>
<div class="num" style="top:161.5px">2</div><div style="left:15.4px;top:159.5px;width:97.6px;height:73.0px;background:#fff;border:.6px solid #d2d2d2"></div>
<div style="left:16.6px;top:169.7px;width:31.8px;height:53.4px;background:#e0f3fa"></div>
<div class="tt" style="left:23.0px;top:172.8px;width:8.0px;color:#56c6dc;font-size:3.200px;font-weight:bold">525</div>
<div class="t " style="left:20.0px;top:187.8px;width:21.5px;text-align:justify;text-align-last:justify;font-size:4.400px;font-weight:bold;color:#222"><span style="position:static;font-size:5.600px">525</span>的意义</div>
<div style="left:19.0px;top:219.0px;width:2.2px;height:2.2px;background:#6b7a4a;border-radius:50% 50% 20% 20%"></div>
<div style="left:108.4px;top:170.0px;width:2.4px;height:3.4px;background:#e6e3b0"></div>
<div style="left:54.5px;top:176.3px;width:50.5px;height:22.2px;background:linear-gradient(90deg,#c4e4f4 0%,#dbe9f6 25%,#f0e3f0 50%,#f6d9e6 72%,#fbeef2 100%)"></div>
<div style="left:54.5px;top:176.3px;width:50.5px;height:22.2px;background:linear-gradient(180deg,rgba(255,255,255,0) 0%,rgba(255,255,255,.1) 60%,rgba(255,255,255,.75) 100%)"></div>
<div class="tt" style="left:72.5px;top:178.7px;width:14.0px;color:#e58fb6;font-size:4.600px;font-weight:bold;height:5px;line-height:5px;text-align:center;top:177.9px">525</div>
<div class="t " style="left:68.6px;top:186.2px;width:21.0px;text-align:justify;text-align-last:justify;font-size:4.200px;font-weight:bold;color:#2f6f7d">心理健康节</div>
<div style="left:71.0px;top:194.6px;width:16.0px;height:1.2px;background:#f3dc7a;border-radius:.6px"></div>
<div style="left:89.6px;top:184.5px;width:3.4px;height:3.4px;background:#e66a94;border-radius:50%"></div>
<div class="tt" style="left:54.5px;top:206.2px;width:50.5px;font-size:2px;line-height:2.400px;height:2.400px;color:#777;top:206.8px">心理健康是指心理的各个方面及活动过程处于一种良好或正常的状态</div>
<div class="tt" style="left:54.5px;top:208.7px;width:50.5px;font-size:2px;line-height:2.400px;height:2.400px;color:#777;top:209.2px">理想状态是保持性格完好、智力正常、认知正确、情感适当</div>
<div class="tt" style="left:54.5px;top:211.1px;width:50.5px;font-size:2px;line-height:2.400px;height:2.400px;color:#777;top:211.6px">意志合理、态度积极、行为恰当、适应良好的状态。每年5月25日</div>
<div class="tt" style="left:54.5px;top:213.4px;width:15.0px;font-size:2px;line-height:2.400px;height:2.400px;color:#777;top:214.0px">为心理健康日。</div>
<div class="num" style="top:243.0px">3</div><div style="left:15.4px;top:240.4px;width:97.6px;height:74.4px;background:#fff;border:.6px solid #d2d2d2"></div>
<div style="left:17.8px;top:253.0px;width:30.2px;height:51.0px;background:linear-gradient(180deg,#2f62c0 0%,#4a83d4 14%,#8ab7e8 30%,#c9e2f5 50%,#e2f0fa 70%,#e6f3fb 100%)"></div>
<div class="tt" style="left:23.5px;top:259.9px;width:20.0px;color:#f4f8ff;font-size:7px;height:8px;line-height:8px;font-family:'Liberation Serif',serif;top:257.6px">525</div>
<div class="tt" style="left:24.0px;top:272.4px;width:11.0px;color:#5a8fd8;font-size:3px;font-weight:bold">我爱我</div>
<div class="tt" style="left:24.0px;top:276.2px;width:11.0px;color:#6b9ad9;font-size:2.600px;font-weight:bold">心理健康</div>
<svg class="ic" style="left:25.0px;top:283.4px" width="14" height="10" viewBox="0 0 14 10" fill="none" stroke="#555" stroke-width="0.8" stroke-linecap="round" stroke-linejoin="round" ><ellipse cx="7" cy="4" rx="6.400" ry="3.600" fill="#3f8f35" stroke="none"/><ellipse cx="4.600" cy="3.200" rx="2.600" ry="2" fill="#56a544" stroke="none"/><ellipse cx="9" cy="4.600" rx="3" ry="2" fill="#2f7a2c" stroke="none"/><rect x="6.400" y="6.500" width="1.200" height="3" fill="#4d6b33" stroke="none"/></svg>
<div style="left:18.8px;top:301.0px;width:2.2px;height:2.2px;background:#6b7a4a;border-radius:50% 50% 20% 20%"></div>
<div style="left:108.4px;top:251.6px;width:2.4px;height:3.4px;background:#e6e3b0"></div>
<div style="left:55.0px;top:255.6px;width:1.2px;height:1.2px;background:#777;transform:rotate(45deg)"></div>
<div class="tt" style="left:59.0px;top:254.4px;width:46.5px;font-size:2.300px;color:#777;text-align:justify;text-align-last:justify">心理健康日的由来：2000年，由北京师范大学心理系团</div>
<div class="tt" style="left:59.0px;top:257.6px;width:46.5px;font-size:2.300px;color:#777;text-align:justify;text-align-last:justify">总支、学生会倡议，随后十多个高校响应。经有关部门批准</div>
<div class="tt" style="left:59.0px;top:260.8px;width:46.5px;font-size:2.300px;color:#777;text-align:justify;text-align-last:justify">确定每年5月25日为全国大学生心理健康日，取“我爱我”</div>
<div class="tt" style="left:59.0px;top:264.1px;width:19.0px;font-size:2.300px;color:#777;text-align:justify;text-align-last:left">谐音，意为关爱自我。</div>
<div style="left:55.0px;top:273.0px;width:1.2px;height:1.2px;background:#777;transform:rotate(45deg)"></div>
<div class="tt" style="left:59.0px;top:271.9px;width:46.5px;font-size:2.300px;color:#777;text-align:justify;text-align-last:justify">活动宗旨：关注心理健康，认识自我、悦纳自我、发展</div>
<div class="tt" style="left:59.0px;top:275.1px;width:46.5px;font-size:2.300px;color:#777;text-align:justify;text-align-last:justify">自我，提高心理素质，促进大学生的全面发展和健康成长。</div>
<div style="left:55.0px;top:284.2px;width:1.2px;height:1.2px;background:#777;transform:rotate(45deg)"></div>
<div class="tt" style="left:59.0px;top:283.1px;width:46.5px;font-size:2.300px;color:#777;text-align:justify;text-align-last:justify">核心内容：关爱自己，了解自己、接纳自己，关注自己</div>
<div class="tt" style="left:59.0px;top:286.2px;width:46.5px;font-size:2.300px;color:#777;text-align:justify;text-align-last:justify">的心理健康和心灵成长，提升自己的心理品质，进而关爱</div>
<div class="tt" style="left:59.0px;top:289.4px;width:46.5px;font-size:2.300px;color:#777;text-align:justify;text-align-last:justify">他人、关爱社会，营造一个和谐的校园环境，这是“525”</div>
<div class="tt" style="left:59.0px;top:292.7px;width:19.0px;font-size:2.300px;color:#777;text-align:justify;text-align-last:left">活动所倡导的理念与精神。</div>
<div class="num" style="top:324.5px;color:#d9826a">4</div><div style="left:14.6px;top:320.8px;width:99.6px;height:75.4px;background:#fdf3ef;border:1px solid #e59a84;border-radius:1px"></div>
<div style="left:16.0px;top:322.200px;width:96.800px;height:72.600px;background:#fff;overflow:hidden"><div class="mini"><div class="bl s" style="top:82.2px">心理障碍是指心理疾病或轻微的心理失调。</div>
<div class="dm" style="top:87.1px"></div>
<div class="bl" style="top:103.1px">它出现在当代大学生身上大多数是因心身疲乏、 紧张</div>
<div class="dm" style="top:108.0px"></div>
<div class="bl" style="top:119.1px">不安、心理矛盾冲突、遇到突如其来的问题或面临难</div>
<div class="bl s" style="top:135.0px">以协调的矛盾等出现。</div>
<div class="bl" style="top:156.0px">时间短、程度较轻微，随情境的改变而消失或减缓;个</div>
<div class="dm" style="top:160.9px"></div>
<div class="bl" style="top:172.0px">别则时间长、程度较重，最后不得不休学甚至退学。</div>
<div class="bl" style="top:188.0px">心理障碍的表现形式多种多样，主要表现在心理活动</div>
<div class="bl" style="top:204.0px">和行为方面。表现在心理活动方面，如感觉过敏或减</div>
<div class="bl" style="top:220.0px">退、体感异常、错觉、幻觉、遗忘、疑病妄想、语词</div>
<div class="bl" style="top:236.0px">新作、意识模糊、紊乱的心理特点和难以相处等等。</div>
<div class="bl" style="top:257.0px">行为方面和焦虑、冷漠、固执、攻击、心情沉重。心</div>
<div class="dm" style="top:261.9px"></div>
<div class="bl s" style="top:273.0px">灰意冷，甚至痛不欲生等。</div>
<div class="ttl" style="top:207.4px">大学生</div>
<div class="ttl" style="top:236.4px">心理健康</div>
<svg style="left:0;top:0" width="490" height="367" viewBox="210 66.6 490 367" font-family="'Liberation Sans','Noto Sans CJK SC',sans-serif">
<defs>
<clipPath id="mcp1"><path d="M259.500 149C249 158 239 174 235 190C231 206 236 221 249 228L300 226C303 210 302 194 296.500 178C288 164 274 153 259.500 149Z"/></clipPath>
<clipPath id="mcp2"><path d="M267 149.500C267.500 144 269 140 271 137.500C279 131 288 126 297 123C308 121.500 319 121.500 327.500 123C331 131 333 140 333.500 148L320 190L297 200L272 165Z"/></clipPath>
<clipPath id="mcp3"><path d="M348 147.300C341 146.500 326 154 314 164C306 170 301 175 297 180C291 192 289 206 291 222C308 226.500 324 228.500 338 227C352 224.500 360 213 361.500 196C362.500 178 357 160 348 147.300Z"/></clipPath>
<filter id="mbl" x="-20%" y="-20%" width="140%" height="140%"><feGaussianBlur stdDeviation="1.600"/></filter>
<filter id="mbl2" x="-20%" y="-20%" width="140%" height="140%"><feGaussianBlur stdDeviation=".5"/></filter>
</defs>
<!-- pear 2 (top) -->
<g clip-path="url(#mcp2)"><rect x="260" y="118" width="80" height="90" fill="#f6e84e"/>
<path d="M268 153L304 121" stroke="#fffef6" stroke-width="19" filter="url(#mbl)"/>
<path d="M300 170L330 150" stroke="#fbf5a0" stroke-width="7" filter="url(#mbl)" opacity=".7"/>
<g fill="#8a7a2c"><circle cx="312" cy="138" r=".45"/><circle cx="318" cy="150" r=".45"/><circle cx="306" cy="156" r=".45"/><circle cx="322" cy="132" r=".45"/><circle cx="300" cy="164" r=".45"/><circle cx="312" cy="164" r=".45"/><circle cx="293" cy="160" r=".45"/><circle cx="316" cy="128" r=".45"/><circle cx="308" cy="146" r=".45"/><circle cx="299" cy="152" r=".45"/><circle cx="304" cy="172" r=".45"/></g></g>
<path d="M267 149.500C267.500 144 269 140 271 137.500C279 131 288 126 297 123.500" fill="none" stroke="#4a4a20" stroke-width=".8"/>
<path d="M327.500 123C331 131 333 140 333.500 148" fill="none" stroke="#3a3a20" stroke-width=".9"/>
<path d="M322.500 139l5.500 1.200M323 143l5.500 1.400M324 147l5 1.200M325.500 151l3.500 1" stroke="#444" stroke-width=".6" fill="none"/>
<!-- pear 3 (right) -->
<g clip-path="url(#mcp3)"><rect x="288" y="140" width="80" height="95" fill="#f6e84a"/>
<path d="M296 188.500L348 162" stroke="#fffef6" stroke-width="19" filter="url(#mbl)"/>
<path d="M330 153L350 150" stroke="#fffbe0" stroke-width="6" filter="url(#mbl)"/>
<g fill="#8a7a2c"><circle cx="347" cy="166" r=".45"/><circle cx="351" cy="176" r=".45"/><circle cx="353" cy="188" r=".45"/><circle cx="347" cy="202" r=".45"/><circle cx="330" cy="217" r=".45"/><circle cx="318" cy="220" r=".45"/><circle cx="341" cy="213" r=".45"/><circle cx="306" cy="212" r=".45"/><circle cx="355" cy="200" r=".45"/><circle cx="344" cy="184" r=".45"/><circle cx="336" cy="154" r=".45"/><circle cx="340" cy="153" r=".45"/><circle cx="332" cy="156" r=".45"/><circle cx="336" cy="196" r=".45"/><circle cx="325" cy="204" r=".45"/></g></g>
<path d="M348 147.300C341 146.500 326 154 314 164C306 170 301 175 297 180" fill="none" stroke="#3a3a20" stroke-width=".9"/>
<path d="M348 147.300C357 160 362.500 178 361.500 196C360 213 352 224.500 338 227C324 228.500 310 226 300 220" fill="none" stroke="#3a3a20" stroke-width=".9"/>
<path d="M348 147.300C351 142 356 137 363 134" fill="none" stroke="#4a3a2a" stroke-width="2.200" stroke-linecap="round"/>
<path d="M351.500 176l3.500 4M353.500 183l2.500 4M355 190l2 4M355.500 197l1.500 4M355 205l1.500 3" stroke="#444" stroke-width=".6" fill="none"/>
<!-- pear 1 (left) -->
<g clip-path="url(#mcp1)"><rect x="228" y="145" width="80" height="88" fill="#f6e850"/>
<path d="M240 193L276 153" stroke="#fffef6" stroke-width="15" filter="url(#mbl)"/>
<path d="M236 215L244 196" stroke="#fbf6b0" stroke-width="5" filter="url(#mbl)"/>
<g fill="#8a7a2c"><circle cx="282" cy="170" r=".45"/><circle cx="287" cy="180" r=".45"/><circle cx="292" cy="192" r=".45"/><circle cx="240" cy="200" r=".45"/><circle cx="238" cy="210" r=".45"/><circle cx="296" cy="200" r=".45"/><circle cx="277" cy="176" r=".45"/><circle cx="262" cy="153" r=".45"/></g></g>
<path d="M259.500 149C249 158 239 174 235 190C231 206 236 221 249 228" fill="none" stroke="#4a4a20" stroke-width=".9"/>
<path d="M259.500 149C274 153 288 164 296.500 178C300 186 302 196 302 204" fill="none" stroke="#3a3a20" stroke-width=".9"/>
<path d="M259 148.500C259 143 255.500 138 248.500 134.500" fill="none" stroke="#4a3a2a" stroke-width="2" stroke-linecap="round"/>
<path d="M257 149C251 143.500 240 144 232.500 151.500C240 156.500 251 155 257 149Z" fill="#a9d98a" stroke="#3c5a30" stroke-width=".7"/>
<path d="M236 151.500C243 150.500 250 149.800 256 149" fill="none" stroke="#5a8a4a" stroke-width=".5"/>
<!-- labels -->
<text x="291.800" y="145.200" font-size="15.500" font-weight="900" fill="#15120c" text-anchor="middle" letter-spacing=".6" transform="rotate(-29 291.800 139.700)">烦躁</text>
<text x="257.200" y="177.200" font-size="14.500" font-weight="900" fill="#15120c" text-anchor="middle" letter-spacing=".8" transform="rotate(-41 257.200 172)">抑郁</text>
<text x="323.200" y="180.500" font-size="15.800" font-weight="900" fill="#15120c" text-anchor="middle" letter-spacing=".8" transform="rotate(-27 323.200 174.800)">焦虑</text>
<!-- motion lines -->
<path d="M224.500 186C219 193 216.500 201 217.500 209M221 213l3.500 1M226 219l2.500 .5" fill="none" stroke="#555" stroke-width=".7" stroke-linecap="round"/>
<path d="M365 184C367 192 367 200 364.500 207M369.500 203l-3.500 8M371.500 209l-3 6" fill="none" stroke="#556" stroke-width=".7" stroke-linecap="round"/>
<!-- body / suit -->
<path d="M297 224C303 221 312 220 320 224C326 230 331 239 332 248C324 253 312 254 300 251Z" fill="#8fd3c3" stroke="#3a5a50" stroke-width=".7"/>
<path d="M316 233l8-2M317 237l9-2M318 241l9-2M319 245l8-2" stroke="#3a6a5c" stroke-width=".6" fill="none"/>
<path d="M277 229C283 225 296 217 304 215C310 217 316 225 318 233C314 243 304 249 294 251L280 251Z" fill="#fff" stroke="#333" stroke-width=".7"/>
<path d="M305 225l2.500-4M309 227l2.500-4M301 235l1 .5M304 237l1 .5" stroke="#444" stroke-width=".7" fill="none"/>
<path d="M278 251C284 247 296 244 305 244L312 247C306 251 296 253 284 253Z" fill="#7cc3b0" stroke="#3a5a50" stroke-width=".6"/>
<!-- right arm -->
<path d="M296 215C298 207 302 200 307 197L322 200L321 207L309 207C306 211 304 217 303 223Z" fill="#fff" stroke="#333" stroke-width=".8"/>
<path d="M319 199.500l-1.500 7.500M322 200l-1.500 7.500" stroke="#333" stroke-width=".6" fill="none"/>
<path d="M322 201C326 199 330 198 333 198L343 196.500L337 201.500L345 206L337 206.500L341 213.500L334 209.500L333 219L329.500 210L326 217L325.500 208C323.500 207 322 205 322 201Z" fill="#fff" stroke="#333" stroke-width=".8" stroke-linejoin="round"/>
<!-- left arm / hand -->
<path d="M242.500 208.500C242 214 242.500 221 244.500 225C250 228.500 258 229.500 266 228.500L262 221.500C258 222 254 221.500 251 219.500C250 216 249.500 211 249.800 207.500Z" fill="#fff" stroke="#333" stroke-width=".8"/>
<path d="M242.500 211l7-1.200" stroke="#333" stroke-width=".6" fill="none"/>
<path d="M243 208C240 205 237.500 201 236.500 197L235 188L238.800 194L239.500 185.500L242 192.500L244 184.500L245.500 192.500L248.500 187.500L248 196L251.500 195L249.800 201C250 203.500 250 206 249.800 207.500Z" fill="#fff" stroke="#333" stroke-width=".8" stroke-linejoin="round"/>
<!-- head -->
<path d="M260.300 196C259.500 206 261 219 265 227.500C268 232 273 233 278 230.500C284 227 288 220 289.500 213C291 206 290.500 199 288 193L268 190Z" fill="#fff" stroke="#333" stroke-width=".8"/>
<path d="M288.500 204.500C291 202 294.500 203.500 294 207.500C293.500 211.500 291 214 288.500 213Z" fill="#fff" stroke="#333" stroke-width=".7"/>
<path d="M252.600 195L255.500 189.500L254.500 188L258.500 186.200C262 184.300 266 183.200 270 182.600L271.500 180.500L275 182L279.500 179.400L281.500 181L287 180.600L288 183L293 184L292 187L295.500 190.500L293 192.500L295.500 196.500L292.500 198.500L292 203L289.500 204.500L288.500 204.200L286.500 200.800L282 197L278 194.300C274 192.600 268 192 262.500 192.500L259.500 194.800L258.500 198L256 195Z" fill="#111" stroke="#111" stroke-width=".7" stroke-linejoin="round"/>
<circle cx="264" cy="205" r="3.700" fill="#fff" stroke="#333" stroke-width=".8"/>
<circle cx="274.900" cy="203.600" r="4.800" fill="#fff" stroke="#333" stroke-width=".8"/>
<circle cx="264.400" cy="203.400" r="1" fill="#222"/><circle cx="277" cy="201" r="1.100" fill="#222"/>
<path d="M260.800 200l4.500-1.800M270.400 195.600l6.600 2.800" stroke="#222" stroke-width="1.100" fill="none"/>
<path d="M267.500 211l-1.500 3.500 2.500 .5" stroke="#333" stroke-width=".7" fill="none"/>
<path d="M269 219C272 217 277 216.500 280 218C280 221 277 224 273.500 224C270.500 223.500 269 222 269 219Z" fill="#fff" stroke="#333" stroke-width=".8"/>
<path d="M270.500 220.500h8" stroke="#333" stroke-width=".5"/>
<circle cx="280.500" cy="210.500" r=".5" fill="#555"/><circle cx="282.500" cy="212.500" r=".5" fill="#555"/><circle cx="262" cy="213" r=".4" fill="#555"/>
<!-- tie -->
<path d="M280.500 227L286.500 224.500L290 229L287.500 232C290.500 237 293 243 293.500 248L288 251.500L283 246.500C282.500 241 282.500 236 283 232Z" fill="#e8506a" stroke="#8a2030" stroke-width=".6"/>
<path d="M283.500 235l5-3M283.500 239l7-4M284 243l8-4.500M285 247l8-4" stroke="#fbd0d6" stroke-width="1" fill="none"/>
<path d="M277 229l4 4 2-6M290 223l2 6" stroke="#333" stroke-width=".7" fill="none"/>
<!-- puffs -->
<path transform="translate(-1 4)" d="M231 236C228 233 230 229 234 230C235 226.500 240 226.500 241.500 229.500C244 228.500 246 230.500 245 233L258 227L246 237.500C248 240 246 243 243 242.500C242 246 237 246.500 235.500 243.500C232 245 228.500 242 230 239C228.500 238.500 229 236.500 231 236Z" fill="#fff" stroke="#444" stroke-width=".8" stroke-linejoin="round"/>
<path d="M256.500 249C254.500 247 255.500 244 258 244C258.500 241.500 261 241 262.500 242.500L264.500 235.500L265.500 243C268 243 269 245.500 268 247.500C268.500 249.500 266.500 251 264.500 250C262 251.500 258 251.500 256.500 249Z" fill="#fff" stroke="#444" stroke-width=".8" stroke-linejoin="round"/>
<!-- small decorations -->
<g filter="url(#mbl2)"><ellipse cx="225.800" cy="365.800" rx="2.800" ry="2.300" fill="#5a9a3a"/><rect x="221.600" y="369.600" width="12" height="9.800" rx="2.500" fill="#983848"/><ellipse cx="227.500" cy="370" rx="3.200" ry="1.700" fill="#f0b030"/><ellipse cx="231.600" cy="368.600" rx="1.300" ry="1.800" fill="#6aa04a"/><ellipse cx="228.600" cy="379.700" rx="2.900" ry="1.400" fill="#f0d428"/><ellipse cx="219.400" cy="379.200" rx="3.400" ry="1.300" fill="#4a8a3a"/></g>
<g filter="url(#mbl2)"><ellipse cx="683.600" cy="121.600" rx="8.600" ry="3.200" transform="rotate(-17 683.600 121.600)" fill="#f6b828"/><ellipse cx="682.500" cy="121" rx="5.500" ry="1.600" transform="rotate(-17 682.500 121)" fill="#fbd848"/><path d="M686.500 132.500L694.600 126.800L693.500 133Z" fill="#9ad0c0"/><path d="M676.500 132.500l4 1.500 3-1 3.500 2.500 3-1.500 3 2M679 136l3-2.500M684 128.500l6-1.500 4 0M688 130.500l-4 4.500M691 131l1.500 5" stroke="#6a6a6a" stroke-width=".6" fill="none"/></g>
<g transform="translate(323.500 264.500)" fill="#222"><rect x="1" y="2" width="1.300" height="1.300"/><rect x="3.500" y=".5" width="1.300" height="1.300"/><rect x="3" y="3.600" width="1.300" height="1.300"/><rect x="5.600" y="2.600" width="1.300" height="1.300"/><rect x="4.600" y="5.800" width="1.300" height="1.300"/><rect x="7" y="5" width="1.300" height="1.300"/><rect x="6.600" y="8" width="1.300" height="1.300"/><rect x="8.600" y="7.400" width="1.200" height="1.200"/></g>
</svg>
</div></div>
<div class="num" style="top:406.0px">5</div><div style="left:15.4px;top:403.2px;width:97.6px;height:40.0px;background:#fff;border:.6px solid #d2d2d2;border-bottom:none"></div>
<div style="left:16.2px;top:415.3px;width:31.6px;height:27.0px;background:#e0f3fa"></div>
<div class="tt" style="left:23.0px;top:417.6px;width:8.0px;color:#56c6dc;font-size:3.200px;font-weight:bold">525</div>
<div class="t " style="left:23.0px;top:435.2px;width:13.5px;text-align:justify;text-align-last:justify;font-size:4.400px;font-weight:bold;color:#222">大学生</div>
<div style="left:108.4px;top:414.8px;width:2.4px;height:3.4px;background:#e6e3b0"></div>
<div style="left:55.0px;top:421.0px;width:1.2px;height:1.2px;background:#777;transform:rotate(45deg)"></div>
<div class="tt" style="left:59.0px;top:419.9px;width:35.0px;font-size:2.300px;color:#777;text-align:justify;text-align-last:left">心理健康的大学生应具备的标准是：</div>
<div style="left:55.0px;top:425.2px;width:1.2px;height:1.2px;background:#777;transform:rotate(45deg)"></div>
<div class="tt" style="left:59.0px;top:424.1px;width:44.0px;font-size:2.300px;color:#777;text-align:justify;text-align-last:justify">能保持对学习较浓厚的兴趣和求知欲望，能正确认识自我，</div>
<div class="tt" style="left:59.0px;top:427.2px;width:44.0px;font-size:2.300px;color:#777;text-align:justify;text-align-last:justify">接纳自我，能协调与控制情绪，保持良好的心境，具有良</div>
<div class="tt" style="left:59.0px;top:430.2px;width:44.0px;font-size:2.300px;color:#777;text-align:justify;text-align-last:justify">好的人际关系和环境适应能力。心理行为符合年龄特征，</div>
<div class="tt" style="left:59.0px;top:433.4px;width:26.0px;font-size:2.300px;color:#777;text-align:justify;text-align-last:left">能保持完整统一的人格品质。</div>
<div style="left:55.0px;top:438.6px;width:1.2px;height:1.2px;background:#777;transform:rotate(45deg)"></div>
<div class="tt" style="left:59.0px;top:437.4px;width:44.0px;font-size:2.300px;color:#777;text-align:justify;text-align-last:justify">心理健康的标准是相对的，大学生心理健康与否应从整体</div>
<div style="left:0.0px;top:441.8px;width:119.0px;height:15.0px;background:#e8e8e8"></div>
<svg class="ic" style="left:57.4px;top:445.6px" width="6.4" height="6.4" viewBox="0 0 6.4 6.4" fill="none" stroke="#555" stroke-width="0.8" stroke-linecap="round" stroke-linejoin="round" ><path d="M3.200 .2v6M.2 3.200h6" stroke="#555" stroke-width=".9"/></svg>
<div id="edit"></div>
<div style="left:144.1px;top:65.7px;width:491.9px;height:368.9px;background:#bdbdbd;border-radius:.5px"></div>
<div id="slide">
<div class="bl s" style="top:82.2px">心理障碍是指心理疾病或轻微的心理失调。</div>
<div class="dm" style="top:87.1px"></div>
<div class="bl" style="top:103.1px">它出现在当代大学生身上大多数是因心身疲乏、 紧张</div>
<div class="dm" style="top:108.0px"></div>
<div class="bl" style="top:119.1px">不安、心理矛盾冲突、遇到突如其来的问题或面临难</div>
<div class="bl s" style="top:135.0px">以协调的矛盾等出现。</div>
<div class="bl" style="top:156.0px">时间短、程度较轻微，随情境的改变而消失或减缓;个</div>
<div class="dm" style="top:160.9px"></div>
<div class="bl" style="top:172.0px">别则时间长、程度较重，最后不得不休学甚至退学。</div>
<div class="bl" style="top:188.0px">心理障碍的表现形式多种多样，主要表现在心理活动</div>
<div class="bl" style="top:204.0px">和行为方面。表现在心理活动方面，如感觉过敏或减</div>
<div class="bl" style="top:220.0px">退、体感异常、错觉、幻觉、遗忘、疑病妄想、语词</div>
<div class="bl" style="top:236.0px">新作、意识模糊、紊乱的心理特点和难以相处等等。</div>
<div class="bl" style="top:257.0px">行为方面和焦虑、冷漠、固执、攻击、心情沉重。心</div>
<div class="dm" style="top:261.9px"></div>
<div class="bl s" style="top:273.0px">灰意冷，甚至痛不欲生等。</div>
<div class="ttl" style="top:207.4px">大学生</div>
<div class="ttl" style="top:236.4px">心理健康</div>
<svg style="left:0;top:0" width="490" height="367" viewBox="210 66.6 490 367" font-family="'Liberation Sans','Noto Sans CJK SC',sans-serif">
<defs>
<clipPath id="cp1"><path d="M259.500 149C249 158 239 174 235 190C231 206 236 221 249 228L300 226C303 210 302 194 296.500 178C288 164 274 153 259.500 149Z"/></clipPath>
<clipPath id="cp2"><path d="M267 149.500C267.500 144 269 140 271 137.500C279 131 288 126 297 123C308 121.500 319 121.500 327.500 123C331 131 333 140 333.500 148L320 190L297 200L272 165Z"/></clipPath>
<clipPath id="cp3"><path d="M348 147.300C341 146.500 326 154 314 164C306 170 301 175 297 180C291 192 289 206 291 222C308 226.500 324 228.500 338 227C352 224.500 360 213 361.500 196C362.500 178 357 160 348 147.300Z"/></clipPath>
<filter id="bl" x="-20%" y="-20%" width="140%" height="140%"><feGaussianBlur stdDeviation="1.600"/></filter>
<filter id="bl2" x="-20%" y="-20%" width="140%" height="140%"><feGaussianBlur stdDeviation=".5"/></filter>
</defs>
<!-- pear 2 (top) -->
<g clip-path="url(#cp2)"><rect x="260" y="118" width="80" height="90" fill="#f6e84e"/>
<path d="M268 153L304 121" stroke="#fffef6" stroke-width="19" filter="url(#bl)"/>
<path d="M300 170L330 150" stroke="#fbf5a0" stroke-width="7" filter="url(#bl)" opacity=".7"/>
<g fill="#8a7a2c"><circle cx="312" cy="138" r=".45"/><circle cx="318" cy="150" r=".45"/><circle cx="306" cy="156" r=".45"/><circle cx="322" cy="132" r=".45"/><circle cx="300" cy="164" r=".45"/><circle cx="312" cy="164" r=".45"/><circle cx="293" cy="160" r=".45"/><circle cx="316" cy="128" r=".45"/><circle cx="308" cy="146" r=".45"/><circle cx="299" cy="152" r=".45"/><circle cx="304" cy="172" r=".45"/></g></g>
<path d="M267 149.500C267.500 144 269 140 271 137.500C279 131 288 126 297 123.500" fill="none" stroke="#4a4a20" stroke-width=".8"/>
<path d="M327.500 123C331 131 333 140 333.500 148" fill="none" stroke="#3a3a20" stroke-width=".9"/>
<path d="M322.500 139l5.500 1.200M323 143l5.500 1.400M324 147l5 1.200M325.500 151l3.500 1" stroke="#444" stroke-width=".6" fill="none"/>
<!-- pear 3 (right) -->
<g clip-path="url(#cp3)"><rect x="288" y="140" width="80" height="95" fill="#f6e84a"/>
<path d="M296 188.500L348 162" stroke="#fffef6" stroke-width="19" filter="url(#bl)"/>
<path d="M330 153L350 150" stroke="#fffbe0" stroke-width="6" filter="url(#bl)"/>
<g fill="#8a7a2c"><circle cx="347" cy="166" r=".45"/><circle cx="351" cy="176" r=".45"/><circle cx="353" cy="188" r=".45"/><circle cx="347" cy="202" r=".45"/><circle cx="330" cy="217" r=".45"/><circle cx="318" cy="220" r=".45"/><circle cx="341" cy="213" r=".45"/><circle cx="306" cy="212" r=".45"/><circle cx="355" cy="200" r=".45"/><circle cx="344" cy="184" r=".45"/><circle cx="336" cy="154" r=".45"/><circle cx="340" cy="153" r=".45"/><circle cx="332" cy="156" r=".45"/><circle cx="336" cy="196" r=".45"/><circle cx="325" cy="204" r=".45"/></g></g>
<path d="M348 147.300C341 146.500 326 154 314 164C306 170 301 175 297 180" fill="none" stroke="#3a3a20" stroke-width=".9"/>
<path d="M348 147.300C357 160 362.500 178 361.500 196C360 213 352 224.500 338 227C324 228.500 310 226 300 220" fill="none" stroke="#3a3a20" stroke-width=".9"/>
<path d="M348 147.300C351 142 356 137 363 134" fill="none" stroke="#4a3a2a" stroke-width="2.200" stroke-linecap="round"/>
<path d="M351.500 176l3.500 4M353.500 183l2.500 4M355 190l2 4M355.500 197l1.500 4M355 205l1.500 3" stroke="#444" stroke-width=".6" fill="none"/>
<!-- pear 1 (left) -->
<g clip-path="url(#cp1)"><rect x="228" y="145" width="80" height="88" fill="#f6e850"/>
<path d="M240 193L276 153" stroke="#fffef6" stroke-width="15" filter="url(#bl)"/>
<path d="M236 215L244 196" stroke="#fbf6b0" stroke-width="5" filter="url(#bl)"/>
<g fill="#8a7a2c"><circle cx="282" cy="170" r=".45"/><circle cx="287" cy="180" r=".45"/><circle cx="292" cy="192" r=".45"/><circle cx="240" cy="200" r=".45"/><circle cx="238" cy="210" r=".45"/><circle cx="296" cy="200" r=".45"/><circle cx="277" cy="176" r=".45"/><circle cx="262" cy="153" r=".45"/></g></g>
<path d="M259.500 149C249 158 239 174 235 190C231 206 236 221 249 228" fill="none" stroke="#4a4a20" stroke-width=".9"/>
<path d="M259.500 149C274 153 288 164 296.500 178C300 186 302 196 302 204" fill="none" stroke="#3a3a20" stroke-width=".9"/>
<path d="M259 148.500C259 143 255.500 138 248.500 134.500" fill="none" stroke="#4a3a2a" stroke-width="2" stroke-linecap="round"/>
<path d="M257 149C251 143.500 240 144 232.500 151.500C240 156.500 251 155 257 149Z" fill="#a9d98a" stroke="#3c5a30" stroke-width=".7"/>
<path d="M236 151.500C243 150.500 250 149.800 256 149" fill="none" stroke="#5a8a4a" stroke-width=".5"/>
<!-- labels -->
<text x="291.800" y="145.200" font-size="15.500" font-weight="900" fill="#15120c" text-anchor="middle" letter-spacing=".6" transform="rotate(-29 291.800 139.700)">烦躁</text>
<text x="257.200" y="177.200" font-size="14.500" font-weight="900" fill="#15120c" text-anchor="middle" letter-spacing=".8" transform="rotate(-41 257.200 172)">抑郁</text>
<text x="323.200" y="180.500" font-size="15.800" font-weight="900" fill="#15120c" text-anchor="middle" letter-spacing=".8" transform="rotate(-27 323.200 174.800)">焦虑</text>
<!-- motion lines -->
<path d="M224.500 186C219 193 216.500 201 217.500 209M221 213l3.500 1M226 219l2.500 .5" fill="none" stroke="#555" stroke-width=".7" stroke-linecap="round"/>
<path d="M365 184C367 192 367 200 364.500 207M369.500 203l-3.500 8M371.500 209l-3 6" fill="none" stroke="#556" stroke-width=".7" stroke-linecap="round"/>
<!-- body / suit -->
<path d="M297 224C303 221 312 220 320 224C326 230 331 239 332 248C324 253 312 254 300 251Z" fill="#8fd3c3" stroke="#3a5a50" stroke-width=".7"/>
<path d="M316 233l8-2M317 237l9-2M318 241l9-2M319 245l8-2" stroke="#3a6a5c" stroke-width=".6" fill="none"/>
<path d="M277 229C283 225 296 217 304 215C310 217 316 225 318 233C314 243 304 249 294 251L280 251Z" fill="#fff" stroke="#333" stroke-width=".7"/>
<path d="M305 225l2.500-4M309 227l2.500-4M301 235l1 .5M304 237l1 .5" stroke="#444" stroke-width=".7" fill="none"/>
<path d="M278 251C284 247 296 244 305 244L312 247C306 251 296 253 284 253Z" fill="#7cc3b0" stroke="#3a5a50" stroke-width=".6"/>
<!-- right arm -->
<path d="M296 215C298 207 302 200 307 197L322 200L321 207L309 207C306 211 304 217 303 223Z" fill="#fff" stroke="#333" stroke-width=".8"/>
<path d="M319 199.500l-1.500 7.500M322 200l-1.500 7.500" stroke="#333" stroke-width=".6" fill="none"/>
<path d="M322 201C326 199 330 198 333 198L343 196.500L337 201.500L345 206L337 206.500L341 213.500L334 209.500L333 219L329.500 210L326 217L325.500 208C323.500 207 322 205 322 201Z" fill="#fff" stroke="#333" stroke-width=".8" stroke-linejoin="round"/>
<!-- left arm / hand -->
<path d="M242.500 208.500C242 214 242.500 221 244.500 225C250 228.500 258 229.500 266 228.500L262 221.500C258 222 254 221.500 251 219.500C250 216 249.500 211 249.800 207.500Z" fill="#fff" stroke="#333" stroke-width=".8"/>
<path d="M242.500 211l7-1.200" stroke="#333" stroke-width=".6" fill="none"/>
<path d="M243 208C240 205 237.500 201 236.500 197L235 188L238.800 194L239.500 185.500L242 192.500L244 184.500L245.500 192.500L248.500 187.500L248 196L251.500 195L249.800 201C250 203.500 250 206 249.800 207.500Z" fill="#fff" stroke="#333" stroke-width=".8" stroke-linejoin="round"/>
<!-- head -->
<path d="M260.300 196C259.500 206 261 219 265 227.500C268 232 273 233 278 230.500C284 227 288 220 289.500 213C291 206 290.500 199 288 193L268 190Z" fill="#fff" stroke="#333" stroke-width=".8"/>
<path d="M288.500 204.500C291 202 294.500 203.500 294 207.500C293.500 211.500 291 214 288.500 213Z" fill="#fff" stroke="#333" stroke-width=".7"/>
<path d="M252.600 195L255.500 189.500L254.500 188L258.500 186.200C262 184.300 266 183.200 270 182.600L271.500 180.500L275 182L279.500 179.400L281.500 181L287 180.600L288 183L293 184L292 187L295.500 190.500L293 192.500L295.500 196.500L292.500 198.500L292 203L289.500 204.500L288.500 204.200L286.500 200.800L282 197L278 194.300C274 192.600 268 192 262.500 192.500L259.500 194.800L258.500 198L256 195Z" fill="#111" stroke="#111" stroke-width=".7" stroke-linejoin="round"/>
<circle cx="264" cy="205" r="3.700" fill="#fff" stroke="#333" stroke-width=".8"/>
<circle cx="274.900" cy="203.600" r="4.800" fill="#fff" stroke="#333" stroke-width=".8"/>
<circle cx="264.400" cy="203.400" r="1" fill="#222"/><circle cx="277" cy="201" r="1.100" fill="#222"/>
<path d="M260.800 200l4.500-1.800M270.400 195.600l6.600 2.800" stroke="#222" stroke-width="1.100" fill="none"/>
<path d="M267.500 211l-1.500 3.500 2.500 .5" stroke="#333" stroke-width=".7" fill="none"/>
<path d="M269 219C272 217 277 216.500 280 218C280 221 277 224 273.500 224C270.500 223.500 269 222 269 219Z" fill="#fff" stroke="#333" stroke-width=".8"/>
<path d="M270.500 220.500h8" stroke="#333" stroke-width=".5"/>
<circle cx="280.500" cy="210.500" r=".5" fill="#555"/><circle cx="282.500" cy="212.500" r=".5" fill="#555"/><circle cx="262" cy="213" r=".4" fill="#555"/>
<!-- tie -->
<path d="M280.500 227L286.500 224.500L290 229L287.500 232C290.500 237 293 243 293.500 248L288 251.500L283 246.500C282.500 241 282.500 236 283 232Z" fill="#e8506a" stroke="#8a2030" stroke-width=".6"/>
<path d="M283.500 235l5-3M283.500 239l7-4M284 243l8-4.500M285 247l8-4" stroke="#fbd0d6" stroke-width="1" fill="none"/>
<path d="M277 229l4 4 2-6M290 223l2 6" stroke="#333" stroke-width=".7" fill="none"/>
<!-- puffs -->
<path transform="translate(-1 4)" d="M231 236C228 233 230 229 234 230C235 226.500 240 226.500 241.500 229.500C244 228.500 246 230.500 245 233L258 227L246 237.500C248 240 246 243 243 242.500C242 246 237 246.500 235.500 243.500C232 245 228.500 242 230 239C228.500 238.500 229 236.500 231 236Z" fill="#fff" stroke="#444" stroke-width=".8" stroke-linejoin="round"/>
<path d="M256.500 249C254.500 247 255.500 244 258 244C258.500 241.500 261 241 262.500 242.500L264.500 235.500L265.500 243C268 243 269 245.500 268 247.500C268.500 249.500 266.500 251 264.500 250C262 251.500 258 251.500 256.500 249Z" fill="#fff" stroke="#444" stroke-width=".8" stroke-linejoin="round"/>
<!-- small decorations -->
<g filter="url(#bl2)"><ellipse cx="225.800" cy="365.800" rx="2.800" ry="2.300" fill="#5a9a3a"/><rect x="221.600" y="369.600" width="12" height="9.800" rx="2.500" fill="#983848"/><ellipse cx="227.500" cy="370" rx="3.200" ry="1.700" fill="#f0b030"/><ellipse cx="231.600" cy="368.600" rx="1.300" ry="1.800" fill="#6aa04a"/><ellipse cx="228.600" cy="379.700" rx="2.900" ry="1.400" fill="#f0d428"/><ellipse cx="219.400" cy="379.200" rx="3.400" ry="1.300" fill="#4a8a3a"/></g>
<g filter="url(#bl2)"><ellipse cx="683.600" cy="121.600" rx="8.600" ry="3.200" transform="rotate(-17 683.600 121.600)" fill="#f6b828"/><ellipse cx="682.500" cy="121" rx="5.500" ry="1.600" transform="rotate(-17 682.500 121)" fill="#fbd848"/><path d="M686.500 132.500L694.600 126.800L693.500 133Z" fill="#9ad0c0"/><path d="M676.500 132.500l4 1.500 3-1 3.500 2.500 3-1.500 3 2M679 136l3-2.500M684 128.500l6-1.500 4 0M688 130.500l-4 4.500M691 131l1.500 5" stroke="#6a6a6a" stroke-width=".6" fill="none"/></g>
<g transform="translate(323.500 264.500)" fill="#222"><rect x="1" y="2" width="1.300" height="1.300"/><rect x="3.500" y=".5" width="1.300" height="1.300"/><rect x="3" y="3.600" width="1.300" height="1.300"/><rect x="5.600" y="2.600" width="1.300" height="1.300"/><rect x="4.600" y="5.800" width="1.300" height="1.300"/><rect x="7" y="5" width="1.300" height="1.300"/><rect x="6.600" y="8" width="1.300" height="1.300"/><rect x="8.600" y="7.400" width="1.200" height="1.200"/></g>
</svg>
</div>
<div id="rpanel"></div>
<div style="left:679.5px;top:57.0px;width:8.0px;height:384.5px;background:linear-gradient(180deg,#eeeeee 0,#ececec 22px,#e3e3e3 30px,#e0e0e0 100%)"></div>
<div style="left:687.3px;top:57.0px;width:0.8px;height:398.0px;background:#dcdcdc"></div>
<svg class="ic" style="left:681.8px;top:64.0px" width="3" height="2" viewBox="0 0 3 2" fill="none" stroke="#555" stroke-width="0.8" stroke-linecap="round" stroke-linejoin="round" ><path d="M0 2L1.500 .2 3 2z" fill="#b5b5b5" stroke="none"/></svg>
<div style="left:680.3px;top:172.2px;width:6.4px;height:32.0px;background:#fcfcfc;border:.5px solid #d6d6d6;border-radius:3.200px"></div>
<svg class="ic" style="left:681.8px;top:415.6px" width="3" height="2" viewBox="0 0 3 2" fill="none" stroke="#555" stroke-width="0.8" stroke-linecap="round" stroke-linejoin="round" ><path d="M0 .2h3L1.500 2z" fill="#888" stroke="none"/></svg>
<svg class="ic" style="left:682.0px;top:422.5px" width="2.6" height="3" viewBox="0 0 2.6 3" fill="none" stroke="#555" stroke-width="0.8" stroke-linecap="round" stroke-linejoin="round" ><path d="M0 1.500L1.300 0l1.300 1.500zM0 1.800L1.300 3l1.300-1.200z" fill="#999" stroke="none"/></svg>
<svg class="ic" style="left:682.0px;top:429.9px" width="2.6" height="3" viewBox="0 0 2.6 3" fill="none" stroke="#555" stroke-width="0.8" stroke-linecap="round" stroke-linejoin="round" ><path d="M0 0l1.300 1.300L2.600 0zM0 1.600l1.300 1.300 1.300-1.300z" fill="#999" stroke="none"/></svg>
<div style="left:699.0px;top:57.0px;width:141.0px;height:2.6px;background:#1b1b1b"></div>
<div class="t " style="left:690.8px;top:60.3px;width:26.4px;text-align:justify;text-align-last:justify;color:#333">自定义动画</div>
<svg class="ic" style="left:719.4px;top:64.0px" width="2" height="1.4" viewBox="0 0 2 1.4" fill="none" stroke="#555" stroke-width="0.8" stroke-linecap="round" stroke-linejoin="round" ><path d="M0 .2h2L1 1.300z" fill="#666" stroke="none"/></svg>
<svg class="ic" style="left:692.2px;top:75.8px" width="6.4" height="6.4" viewBox="0 0 6.4 6.4" fill="none" stroke="#555" stroke-width="0.8" stroke-linecap="round" stroke-linejoin="round" ><rect x=".3" y=".3" width="3.800" height="3.800" rx=".5" fill="#7c8a5a" stroke="none"/><rect x="2.400" y="2.400" width="3.600" height="3.600" rx=".5" fill="#f0f0f0" stroke="#8a9570" stroke-width=".6"/><path d="M3.200 4.200l.8.800 1.400-1.500" stroke="#7c8a5a" stroke-width=".5"/></svg>
<div class="t " style="left:701.9px;top:75.5px;width:21.4px;text-align:justify;text-align-last:justify;color:#444">选择窗格</div>
<div style="left:691.6px;top:90.2px;width:32.6px;height:7.4px;background:#fbe5d2;border-radius:1px"></div>
<div class="t " style="left:692.6px;top:89.9px;width:30.5px;text-align:justify;text-align-last:justify;color:#e2935f;font-size:6px">自定义动画</div>
<div style="left:692.7px;top:102.0px;width:42.4px;height:8.5px;background:#fbfbfb;border:.5px solid #e6e6e6;border-radius:1px"></div>
<svg class="ic" style="left:696.3px;top:103.9px" width="4.6" height="4.6" viewBox="0 0 4.6 4.6" fill="none" stroke="#555" stroke-width="0.8" stroke-linecap="round" stroke-linejoin="round" ><path d="M.4 4.200L3.600 .6l.8.700L1.200 4.400z" stroke="#c8c8c8" stroke-width=".6"/></svg>
<div class="t g" style="left:702.6px;top:102.3px;width:20.6px;text-align:justify;text-align-last:justify;">添加效果</div>
<svg class="ic" style="left:730.0px;top:105.9px" width="2" height="1.4" viewBox="0 0 2 1.4" fill="none" stroke="#555" stroke-width="0.8" stroke-linecap="round" stroke-linejoin="round" ><path d="M0 .2h2L1 1.300z" fill="#ccc" stroke="none"/></svg>
<div style="left:739.0px;top:102.0px;width:50.0px;height:8.5px;background:#fbfbfb;border:.5px solid #e6e6e6;border-radius:1px"></div>
<svg class="ic" style="left:743.1px;top:103.9px" width="4.6" height="4.6" viewBox="0 0 4.6 4.6" fill="none" stroke="#555" stroke-width="0.8" stroke-linecap="round" stroke-linejoin="round" ><circle cx="2.300" cy="2.300" r="1.900" stroke="#c8c8c8" stroke-width=".6"/></svg>
<div class="t g" style="left:750.4px;top:102.3px;width:20.6px;text-align:justify;text-align-last:justify;">智能动画</div>
<div class="t " style="left:692.4px;top:121.6px;width:23.5px;text-align:justify;text-align-last:justify;color:#b0b0b0;font-size:6px">修改效果</div>
<div class="t " style="left:692.4px;top:132.8px;color:#b0b0b0">开始:</div>
<div style="left:707.0px;top:132.0px;width:90.0px;height:9.4px;background:#fafafa;border:.5px solid #e3e3e3;border-radius:1px"></div>
<div class="t " style="left:692.4px;top:145.8px;color:#b0b0b0">属性:</div>
<div style="left:707.0px;top:145.0px;width:90.0px;height:9.4px;background:#fafafa;border:.5px solid #e3e3e3;border-radius:1px"></div>
<div class="t " style="left:692.4px;top:158.8px;color:#b0b0b0">速度:</div>
<div style="left:707.0px;top:158.0px;width:90.0px;height:9.4px;background:#fafafa;border:.5px solid #e3e3e3;border-radius:1px"></div>
<div style="left:692.8px;top:172.0px;width:122.6px;height:236.0px;background:#fff;border:.5px solid #e2e2e2"></div>
<div class="t " style="left:697.4px;top:173.6px;width:99.5px;text-align:justify;text-align-last:justify;color:#666">选中幻灯片的某个元素，然后单击 “添加效</div>
<div class="t " style="left:697.4px;top:180.6px;color:#666">果” 添加动画。</div>
<div class="t " style="left:692.4px;top:412.8px;width:21.0px;text-align:justify;text-align-last:justify;color:#b0b0b0">重新排序</div>
<div style="left:717.5px;top:412.4px;width:9.6px;height:9.0px;background:#fbfbfb;border:.5px solid #e6e6e6;border-radius:1px"></div>
<svg class="ic" style="left:720.3px;top:414.4px" width="4" height="5" viewBox="0 0 4 5" fill="none" stroke="#555" stroke-width="0.8" stroke-linecap="round" stroke-linejoin="round" ><path d="M2 .3L.2 2.300h1.100v2.400h1.400V2.300h1.100z" fill="#d0d0d0" stroke="none"/></svg>
<div style="left:732.0px;top:412.4px;width:9.8px;height:9.0px;background:#fbfbfb;border:.5px solid #e6e6e6;border-radius:1px"></div>
<svg class="ic" style="left:734.9px;top:414.4px" width="4" height="5" viewBox="0 0 4 5" fill="none" stroke="#555" stroke-width="0.8" stroke-linecap="round" stroke-linejoin="round" ><path d="M2 4.700L.2 2.700h1.100V.3h1.400v2.400h1.100z" fill="#d0d0d0" stroke="none"/></svg>
<div style="left:693.2px;top:425.4px;width:28.8px;height:9.0px;background:#fbfbfb;border:.5px solid #e6e6e6;border-radius:1px"></div>
<svg class="ic" style="left:699.6px;top:428.0px" width="4" height="4" viewBox="0 0 4 4" fill="none" stroke="#555" stroke-width="0.8" stroke-linecap="round" stroke-linejoin="round" ><circle cx="2" cy="2" r="1.700" stroke="#d4d4d4" stroke-width=".6"/></svg>
<div class="t g" style="left:706.0px;top:426.1px;width:10.4px;text-align:justify;text-align-last:justify;">播放</div>
<div style="left:726.2px;top:425.4px;width:43.5px;height:9.0px;background:#fbfbfb;border:.5px solid #e6e6e6;border-radius:1px"></div>
<svg class="ic" style="left:731.0px;top:427.0px" width="6" height="6" viewBox="0 0 6 6" fill="none" stroke="#555" stroke-width="0.8" stroke-linecap="round" stroke-linejoin="round" ><path d="M.3 .6h5.400M.8 .8v3h4.400v-3M3 3.800v1.800M1.800 5.600h2.400" stroke="#e07a55" stroke-width=".8"/></svg>
<div class="t " style="left:738.0px;top:426.1px;width:26.5px;text-align:justify;text-align-last:justify;color:#444">幻灯片播放</div>
<div style="left:692.6px;top:440.6px;width:5.6px;height:5.6px;background:#fdfdfd;border:.6px solid #9a9a9a"></div>
<svg class="ic" style="left:693.4px;top:441.7px" width="4" height="3.4" viewBox="0 0 4 3.4" fill="none" stroke="#555" stroke-width="0.8" stroke-linecap="round" stroke-linejoin="round" ><path d="M.7 1.800l1 1L3.300 .8" stroke="#666" stroke-width=".55"/></svg>
<div class="t " style="left:700.0px;top:439.6px;width:21.0px;text-align:justify;text-align-last:justify;color:#444">自动预览</div>
<div style="left:815.4px;top:57.0px;width:6.0px;height:400.0px;background:#ececec"></div>
<div style="left:821.4px;top:57.0px;width:19.2px;height:400.0px;background:#ececec"></div>
<svg class="ic" style="left:826.7px;top:164.2px" width="7" height="6" viewBox="0 0 7 6" fill="none" stroke="#666" stroke-width="0.7" stroke-linecap="round" stroke-linejoin="round" ><circle cx="3.500" cy="3" r="2.600"/></svg>
<div class="t " style="left:825.3px;top:170.6px;width:10.0px;text-align:justify;text-align-last:justify;font-size:4.800px;color:#555">配色</div>
<svg class="ic" style="left:826.7px;top:187.2px" width="7" height="6" viewBox="0 0 7 6" fill="none" stroke="#666" stroke-width="0.7" stroke-linecap="round" stroke-linejoin="round" ><rect x=".5" y=".5" width="6" height="5"/><path d="M2 4.500V3M3.500 4.500V1.800M5 4.500V2.600"/></svg>
<div class="t " style="left:825.3px;top:193.6px;width:10.0px;text-align:justify;text-align-last:justify;font-size:4.800px;color:#555">图表</div>
<svg class="ic" style="left:826.7px;top:211.0px" width="7" height="6" viewBox="0 0 7 6" fill="none" stroke="#666" stroke-width="0.7" stroke-linecap="round" stroke-linejoin="round" ><path d="M.5 1h6M.5 3h4M2 5h4.500"/><circle cx="5.400" cy="3" r=".8"/></svg>
<div class="t " style="left:825.3px;top:217.4px;width:10.0px;text-align:justify;text-align-last:justify;font-size:4.800px;color:#555">属性</div>
<svg class="ic" style="left:826.7px;top:233.6px" width="7" height="6" viewBox="0 0 7 6" fill="none" stroke="#666" stroke-width="0.7" stroke-linecap="round" stroke-linejoin="round" ><rect x=".5" y=".5" width="6" height="5" rx=".6"/><path d="M1.500 4.200l1.400-1.600 1.200 1.200.8-.8 1 1.200"/></svg>
<div class="t " style="left:825.3px;top:240.0px;width:10.0px;text-align:justify;text-align-last:justify;font-size:4.800px;color:#555">图库</div>
<svg class="ic" style="left:826.7px;top:255.2px" width="7" height="6" viewBox="0 0 7 6" fill="none" stroke="#666" stroke-width="0.7" stroke-linecap="round" stroke-linejoin="round" ><circle cx="3.500" cy="3" r="2.700"/><path d="M2.200 3.800L3.500 1.600l1.300 2.200z"/></svg>
<div class="t " style="left:825.3px;top:261.6px;width:10.0px;text-align:justify;text-align-last:justify;font-size:4.800px;color:#555">风格</div>
<div style="left:827.0px;top:283.0px;width:6.4px;height:0.7px;background:#bbb"></div>
<div class="t " style="left:825.3px;top:290.8px;width:10.0px;text-align:justify;text-align-last:justify;font-size:4.800px;color:#555">设置</div>
<div style="left:119.0px;top:441.6px;width:568.3px;height:14.8px;background:#e8e8e8"></div>
<div style="left:119.0px;top:441.4px;width:568.3px;height:0.7px;background:#dedede"></div>
<svg class="ic" style="left:125.4px;top:446.7px" width="6" height="5" viewBox="0 0 6 5" fill="none" stroke="#555" stroke-width="0.8" stroke-linecap="round" stroke-linejoin="round" ><rect x=".4" y=".4" width="5.200" height="4.200" stroke="#555" stroke-width=".7"/><path d="M1.600 1.800h2.800M1.600 3h1.800" stroke="#555" stroke-width=".6"/></svg>
<div class="t " style="left:135.4px;top:445.4px;width:45.5px;text-align:justify;text-align-last:justify;color:#555">单击此处添加备注</div>
<div id="status"></div>
<div class="t " style="left:4.4px;top:461.2px;width:16.2px;text-align:justify;text-align-last:justify;color:#555">幻灯片</div>
<div class="t " style="left:23.4px;top:461.2px;color:#555;font-size:6.200px;letter-spacing:.1px">4 / 10</div>
<div class="t " style="left:47.0px;top:461.2px;color:#555;font-size:5.600px;letter-spacing:-.1px">2_Office</div>
<div class="t " style="left:69.0px;top:461.2px;width:10.2px;text-align:justify;text-align-last:justify;color:#555">主题</div>
<svg class="ic" style="left:89.4px;top:462.4px" width="5.6" height="5.6" viewBox="0 0 5.6 5.6" fill="none" stroke="#555" stroke-width="0.8" stroke-linecap="round" stroke-linejoin="round" ><circle cx="2.800" cy="2.800" r="2.400" stroke="#777" stroke-width=".6"/><path d="M1.800 1.800l2 2M3.800 1.800l-2 2" stroke="#777" stroke-width=".5"/></svg>
<div class="t " style="left:98.0px;top:461.2px;width:26.0px;text-align:justify;text-align-last:justify;color:#555">文档未保护</div>
<svg class="ic" style="left:137.7px;top:462.4px" width="5" height="5.6" viewBox="0 0 5 5.6" fill="none" stroke="#555" stroke-width="0.8" stroke-linecap="round" stroke-linejoin="round" ><path d="M.3 .6h3.600M2.100 .6v4M3.200 2.600h1.500M4 2.600v2.600" stroke="#666" stroke-width=".7"/></svg>
<div class="t " style="left:146.0px;top:461.2px;width:21.0px;text-align:justify;text-align-last:justify;color:#555">缺失字体</div>
<svg class="ic" style="left:383.3px;top:462.2px" width="6" height="6" viewBox="0 0 6 6" fill="none" stroke="#555" stroke-width="0.8" stroke-linecap="round" stroke-linejoin="round" ><path d="M3 .4l2.400 1.200v2.800L3 5.600.6 4.400V1.600z" stroke="#666" stroke-width=".6"/><path d="M.6 1.600L3 2.800l2.400-1.200M3 2.800v2.800" stroke="#666" stroke-width=".5"/></svg>
<div class="t " style="left:393.2px;top:461.2px;width:20.5px;text-align:justify;text-align-last:justify;color:#555">一键美化</div>
<svg class="ic" style="left:416.4px;top:464.9px" width="2" height="1.4" viewBox="0 0 2 1.4" fill="none" stroke="#555" stroke-width="0.8" stroke-linecap="round" stroke-linejoin="round" ><path d="M0 .2h2L1 1.300z" fill="#666" stroke="none"/></svg>
<svg class="ic" style="left:627.4px;top:463.0px" width="6" height="4.4" viewBox="0 0 6 4.4" fill="none" stroke="#555" stroke-width="0.8" stroke-linecap="round" stroke-linejoin="round" ><path d="M0 .5h5.600M0 2.200h5.600M0 3.900h3" stroke="#777" stroke-width=".7"/></svg>
<svg class="ic" style="left:634.4px;top:464.9px" width="2" height="1.4" viewBox="0 0 2 1.4" fill="none" stroke="#555" stroke-width="0.8" stroke-linecap="round" stroke-linejoin="round" ><path d="M0 .2h2L1 1.300z" fill="#777" stroke="none"/></svg>
<div style="left:640.2px;top:459.8px;width:9.2px;height:9.4px;background:#d4d4d4;border-radius:1px"></div>
<svg class="ic" style="left:641.6px;top:462.4px" width="6.4" height="5.6" viewBox="0 0 6.4 5.6" fill="none" stroke="#555" stroke-width="0.8" stroke-linecap="round" stroke-linejoin="round" ><rect x=".4" y=".4" width="5.600" height="4.800" stroke="#555" stroke-width=".7"/><rect x="1.700" y="1.500" width="3" height="2.600" fill="#777" stroke="none"/></svg>
<svg class="ic" style="left:653.0px;top:462.4px" width="6" height="5.6" viewBox="0 0 6 5.6" fill="none" stroke="#555" stroke-width="0.8" stroke-linecap="round" stroke-linejoin="round" ><rect x=".3" y=".3" width="2" height="2" stroke="#666" stroke-width=".6"/><rect x="3.600" y=".3" width="2" height="2" stroke="#666" stroke-width=".6"/><rect x=".3" y="3.300" width="2" height="2" stroke="#666" stroke-width=".6"/><rect x="3.600" y="3.300" width="2" height="2" stroke="#666" stroke-width=".6"/></svg>
<svg class="ic" style="left:664.0px;top:462.4px" width="6.4" height="5.6" viewBox="0 0 6.4 5.6" fill="none" stroke="#555" stroke-width="0.8" stroke-linecap="round" stroke-linejoin="round" ><rect x=".4" y=".4" width="5.600" height="4.800" rx=".5" stroke="#666" stroke-width=".7"/><path d="M3.200 .4v4.800" stroke="#666" stroke-width=".6"/></svg>
<svg class="ic" style="left:675.2px;top:462.4px" width="6.4" height="5.6" viewBox="0 0 6.4 5.6" fill="none" stroke="#555" stroke-width="0.8" stroke-linecap="round" stroke-linejoin="round" ><rect x=".4" y=".4" width="4.600" height="4.800" rx=".5" stroke="#666" stroke-width=".7"/><path d="M3.600 2l2.400 1.200-2.400 1.200z" fill="#666" stroke="none"/></svg>
<div style="left:691.6px;top:459.0px;width:13.8px;height:11.2px;background:#e9694f;border-radius:1.500px"></div>
<svg class="ic" style="left:696.4px;top:462.1px" width="4.4" height="5" viewBox="0 0 4.4 5" fill="none" stroke="#555" stroke-width="0.8" stroke-linecap="round" stroke-linejoin="round" ><path d="M.4 .4l3.600 2.100L.4 4.600z" fill="#fff6e8" stroke="none"/></svg>
<svg class="ic" style="left:707.8px;top:464.9px" width="2" height="1.4" viewBox="0 0 2 1.4" fill="none" stroke="#555" stroke-width="0.8" stroke-linecap="round" stroke-linejoin="round" ><path d="M0 .2h2L1 1.300z" fill="#777" stroke="none"/></svg>
<div class="t " style="left:718.0px;top:461.2px;color:#777;font-size:5.600px">116%</div>
<svg class="ic" style="left:734.4px;top:464.9px" width="2" height="1.4" viewBox="0 0 2 1.4" fill="none" stroke="#555" stroke-width="0.8" stroke-linecap="round" stroke-linejoin="round" ><path d="M0 .2h2L1 1.300z" fill="#999" stroke="none"/></svg>
<svg class="ic" style="left:741.8px;top:464.7px" width="3.6" height="1" viewBox="0 0 3.6 1" fill="none" stroke="#555" stroke-width="0.8" stroke-linecap="round" stroke-linejoin="round" ><path d="M0 .5h3.600" stroke="#555" stroke-width=".8"/></svg>
<div style="left:751.4px;top:464.9px;width:63.5px;height:0.7px;background:#ababab"></div>
<div style="left:780.3px;top:462.9px;width:4.6px;height:4.6px;background:#f6f6f6;border:.7px solid #777;border-radius:50%"></div>
<svg class="ic" style="left:816.6px;top:463.0px" width="4.4" height="4.4" viewBox="0 0 4.4 4.4" fill="none" stroke="#555" stroke-width="0.8" stroke-linecap="round" stroke-linejoin="round" ><path d="M0 2.200h4.400M2.200 0v4.400" stroke="#555" stroke-width=".8"/></svg>
<svg class="ic" style="left:827.7px;top:462.5px" width="5.4" height="5.4" viewBox="0 0 5.4 5.4" fill="none" stroke="#555" stroke-width="0.8" stroke-linecap="round" stroke-linejoin="round" ><path d="M.3 1.600V.3h1.300M3.800 .3h1.300v1.300M5.100 3.800v1.300H3.800M1.600 5.100H.3V3.800" stroke="#888" stroke-width=".6"/></svg>
</div>
<div id="side"><div style="left:18.800px;top:188.600px;width:15.300px;height:94.600px;border:1.900px solid #c9c9c9;border-radius:7.650px;background:#fefefe"></div></div>
<div class="ov" style="left:842.6px;top:54.8px;width:110.2px;height:110px;background:linear-gradient(180deg,#464646 0%,#444 50%,#2b2b2b 78%,#1a1a1a 100%);box-shadow:inset 0 0 0 .6px rgba(0,0,0,.5)"><svg style="left:20.200px;top:20.200px" width="69" height="69" viewBox="0 0 69 69">
<defs>
<clipPath id="avc"><circle cx="34.500" cy="34.500" r="33.600"/></clipPath>
<linearGradient id="avg" x1="0" y1="0" x2="0" y2="1"><stop offset="0" stop-color="#c9ae7c"/><stop offset=".07" stop-color="#e2cb9a"/><stop offset=".13" stop-color="#b09a76"/><stop offset=".19" stop-color="#5e5446"/><stop offset=".26" stop-color="#7d6c52"/><stop offset=".32" stop-color="#4a4034"/><stop offset=".42" stop-color="#86683a"/><stop offset=".55" stop-color="#5a4226"/><stop offset=".7" stop-color="#3e2e1c"/><stop offset=".86" stop-color="#5e4628"/><stop offset="1" stop-color="#a8864e"/></linearGradient>
<radialGradient id="av1" cx=".5" cy=".5" r=".5"><stop offset="0" stop-color="#e6b862" stop-opacity=".95"/><stop offset=".6" stop-color="#c99a4a" stop-opacity=".6"/><stop offset="1" stop-color="#c99a4a" stop-opacity="0"/></radialGradient>
<radialGradient id="av2" cx=".5" cy=".5" r=".5"><stop offset="0" stop-color="#261a10" stop-opacity=".95"/><stop offset=".65" stop-color="#2e2216" stop-opacity=".75"/><stop offset="1" stop-color="#2e2216" stop-opacity="0"/></radialGradient>
<radialGradient id="av3" cx=".5" cy=".5" r=".5"><stop offset="0" stop-color="#c9a66a" stop-opacity=".9"/><stop offset="1" stop-color="#c9a66a" stop-opacity="0"/></radialGradient>
<linearGradient id="avmg" x1="0" y1="0" x2="0" y2="1"><stop offset=".24" stop-color="#000"/><stop offset=".44" stop-color="#fff"/></linearGradient><mask id="avm"><rect width="69" height="69" fill="url(#avmg)"/></mask>
<filter id="avn" x="0" y="0" width="1" height="1"><feTurbulence type="fractalNoise" baseFrequency=".2 .3" numOctaves="3" seed="7"/><feColorMatrix type="matrix" values="0 0 0 0 .95  0 0 0 0 .76  0 0 0 0 .4  1.800 1.400 0 0 -1.450"/></filter>
<filter id="avd" x="0" y="0" width="1" height="1"><feTurbulence type="fractalNoise" baseFrequency=".05 .16" numOctaves="2" seed="3"/><feColorMatrix type="matrix" values="0 0 0 0 .14  0 0 0 0 .1  0 0 0 0 .06  0 1.800 1.200 0 -1.300"/></filter>
</defs>
<g clip-path="url(#avc)">
<rect width="69" height="69" fill="url(#avg)"/>
<ellipse cx="46" cy="14" rx="24" ry="3" fill="#4a4338" opacity=".7"/>
<ellipse cx="24" cy="20" rx="22" ry="2.500" fill="#8a7a60" opacity=".6"/>
<ellipse cx="20" cy="35" rx="22" ry="9" fill="url(#av1)"/>
<ellipse cx="57" cy="44" rx="17" ry="14" fill="url(#av2)"/>
<ellipse cx="58" cy="28" rx="16" ry="7" fill="url(#av2)" opacity=".75"/>
<ellipse cx="32" cy="51" rx="17" ry="8" fill="url(#av2)" opacity=".85"/>
<ellipse cx="50" cy="56" rx="18" ry="5" transform="rotate(-38 50 56)" fill="url(#av3)"/>
<ellipse cx="40" cy="66" rx="20" ry="7" fill="url(#av3)"/>
<g mask="url(#avm)"><rect y="14" width="69" height="55" filter="url(#avn)" opacity=".62"/></g>
<rect y="10" width="69" height="59" filter="url(#avd)" opacity=".55"/>
</g>
<circle cx="34.500" cy="34.500" r="33.600" fill="none" stroke="#e3d3b0" stroke-width=".9"/>
</svg><svg style="left:3.200px;top:86.200px" width="17" height="20" viewBox="0 0 17 20"><rect x="4.700" y="0.300" width="7.600" height="13" rx="3.800" fill="#fff"/><path d="M1.300 8.500v1.300a7.200 7.200 0 0 0 14.400 0V8.500" fill="none" stroke="#fff" stroke-width="2" stroke-linecap="round"/><path d="M8.500 16.500v2.500" stroke="#fff" stroke-width="2.200" stroke-linecap="round"/></svg><div style="left:21.200px;top:84.400px;font-family:'Liberation Sans',sans-serif;font-size:11.200px;line-height:14px;color:#fff;white-space:nowrap;transform:scaleX(.9);transform-origin:0 0">GODOT</div></div>
<div class="ov" style="left:850px;top:342px;width:63px;height:63px;border-radius:50%;background:rgba(42,42,42,.5)"><svg style="left:16px;top:14px" width="31" height="38" viewBox="0 0 31 38"><rect x="10" y="1" width="11" height="20" rx="5.500" fill="#fff"/><path d="M5 14.500v2a10.500 10.500 0 0 0 21 0v-2" fill="none" stroke="#fff" stroke-width="2.600" stroke-linecap="round"/><path d="M15.500 27v6M9.500 33.500h12" stroke="#fff" stroke-width="2.600" stroke-linecap="round"/><path d="M2.500 30L29.500 3.500" stroke="#ee9f9a" stroke-width="2.400" stroke-linecap="round"/></svg></div>
</body>
</html>
